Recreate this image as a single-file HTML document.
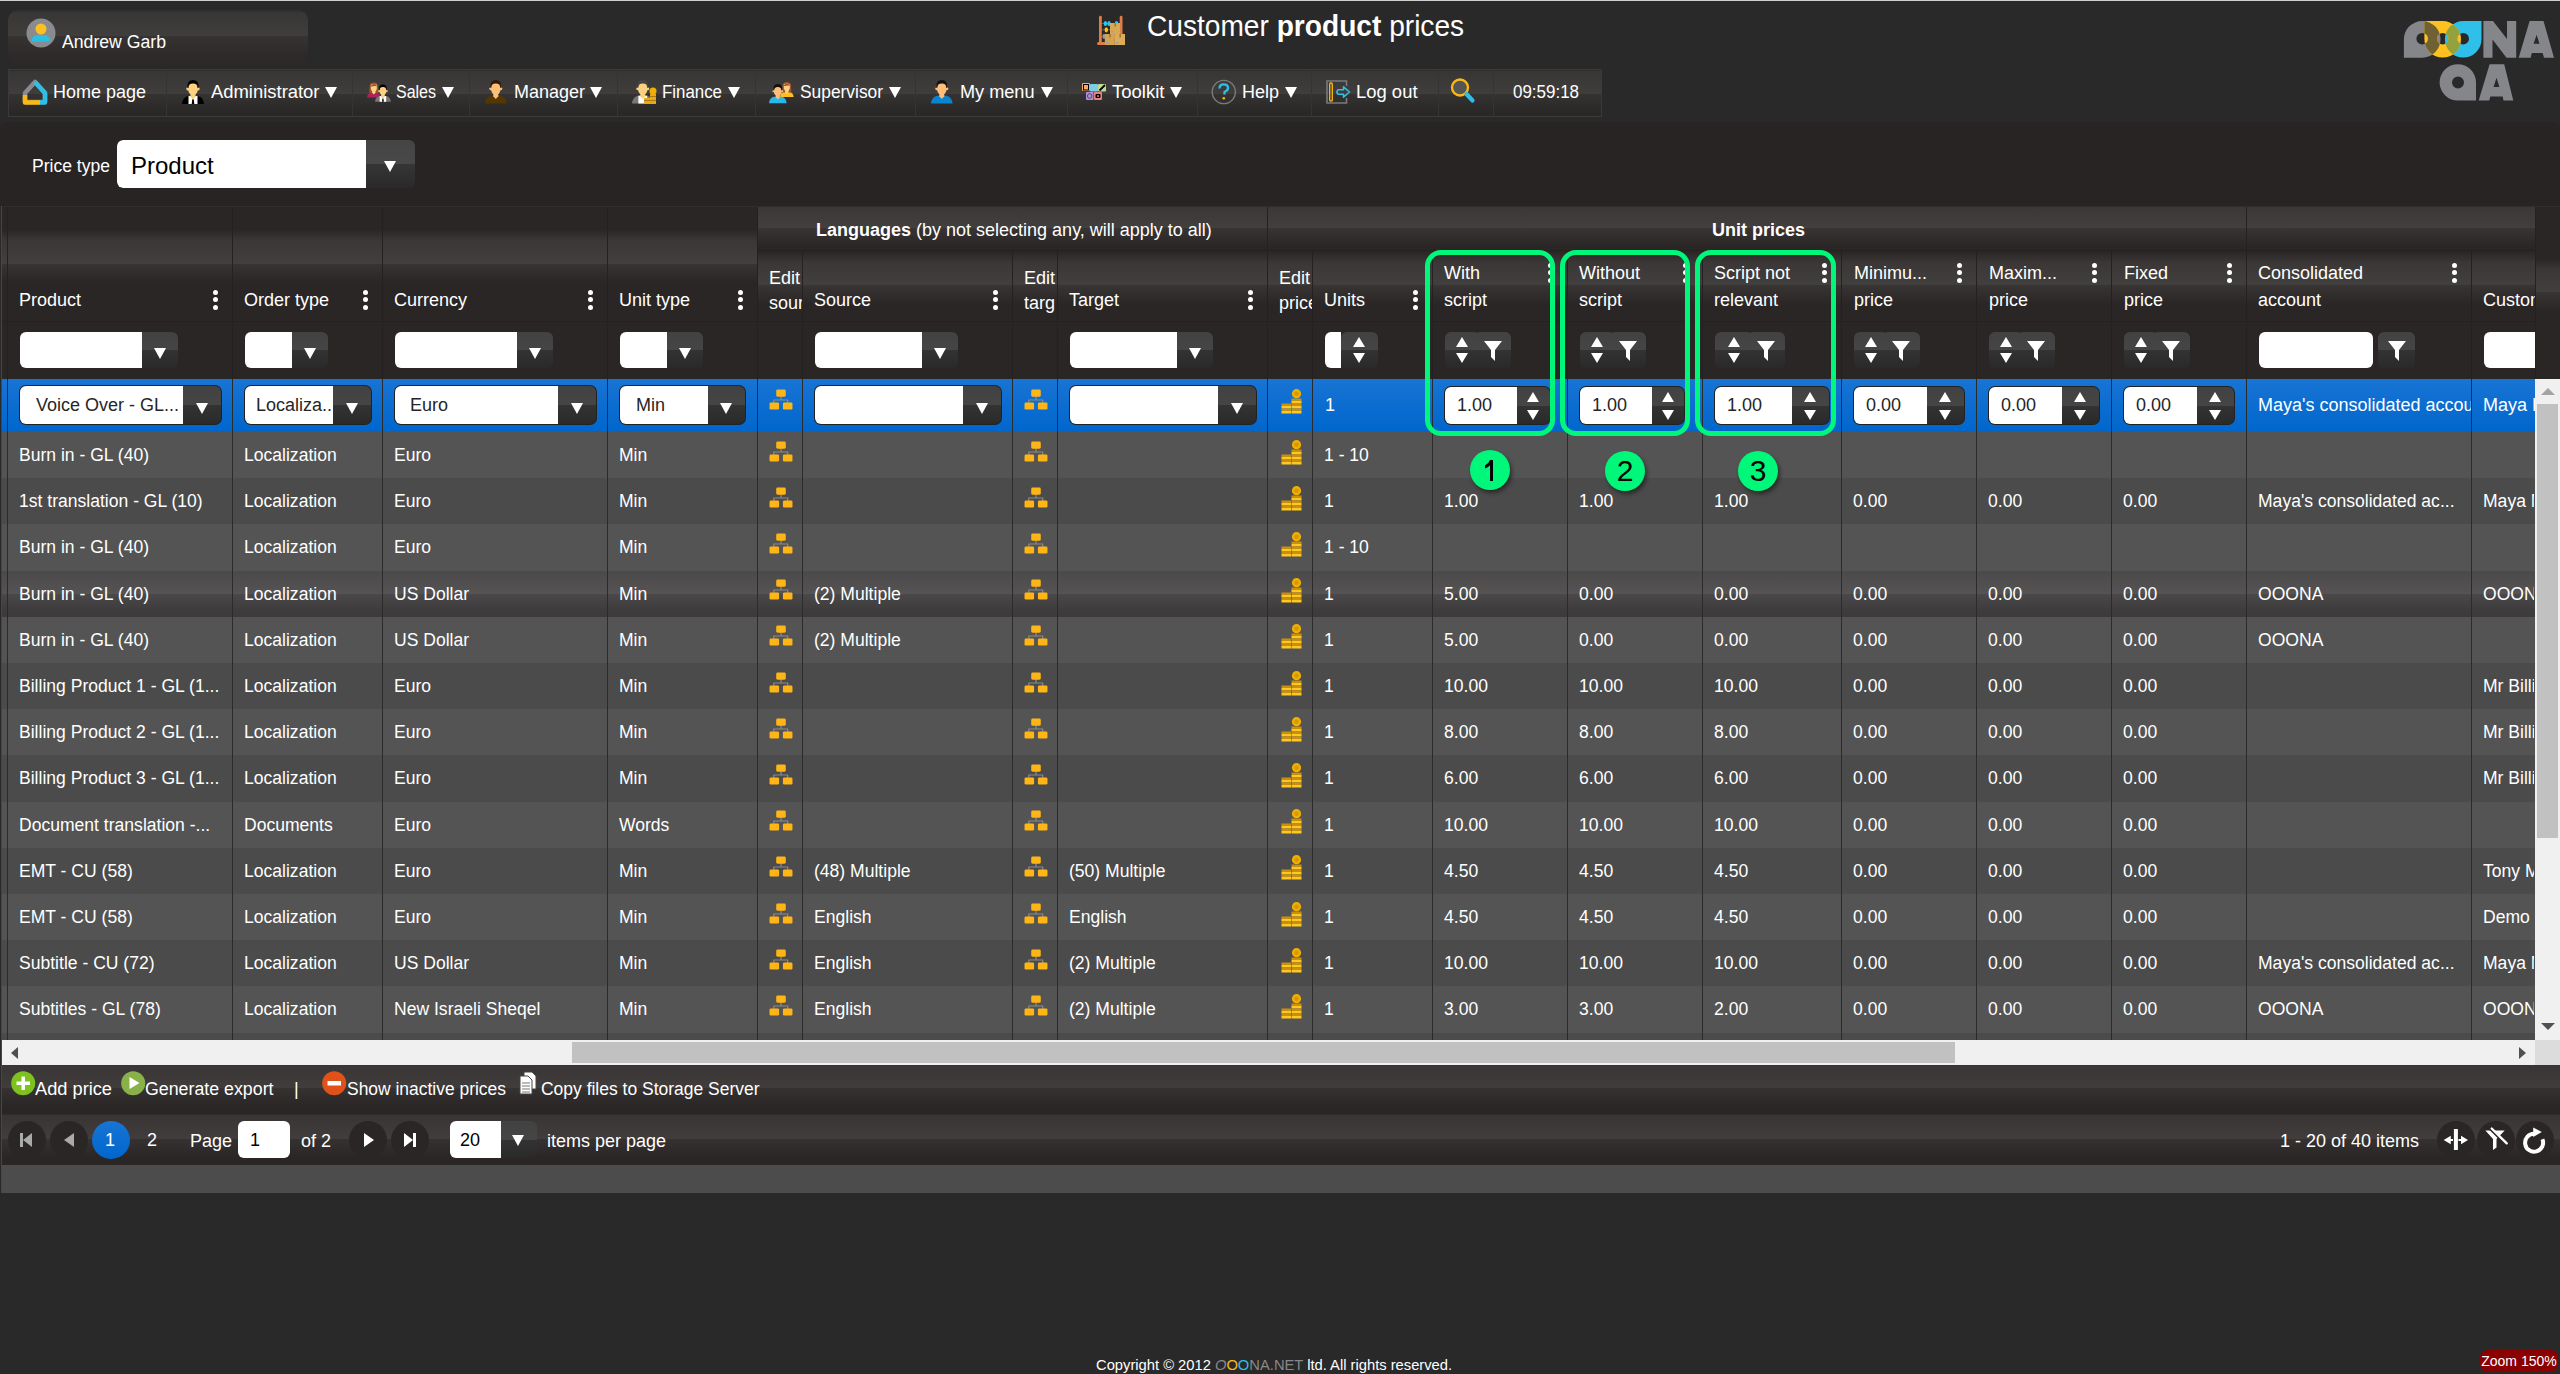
<!DOCTYPE html><html><head><meta charset='utf-8'><style>
*{box-sizing:border-box;margin:0;padding:0}
html,body{width:2560px;height:1374px;overflow:hidden;background:#292929;font-family:"Liberation Sans", sans-serif;color:#fff}
.a{position:absolute}
.t{position:absolute;white-space:nowrap;font-size:18px;line-height:24px}
.clip{overflow:hidden}
.tri{position:absolute;width:0;height:0;border-left:6.5px solid transparent;border-right:6.5px solid transparent;border-top:11px solid #fff}
.keb{position:absolute;width:5px;height:20px}
.keb i{position:absolute;left:0;width:5px;height:5px;border-radius:50%;background:#fff}
</style></head><body>
<div class='a' style='left:0;top:0;width:2560px;height:1px;background:#cfcfcf'></div>
<div class='a' style='left:8px;top:9px;width:300px;height:54px;border-radius:12px;background:linear-gradient(to bottom, #2b2828 0px, #2b2828 -7px, #393636 4px, #403e3d 27px, #363433 27px, #2d2a29 46px, #2d2a29 54px)'></div>
<svg class='a' style='left:26px;top:18px' width='30' height='30' viewBox='0 0 30 30'>
<circle cx='15' cy='15' r='14.5' fill='#8a8b8f'/><circle cx='15' cy='11' r='5.5' fill='#fec01e'/>
<path d='M5.5 23.5 Q6 17.5 11 17 L19 17 Q24 17.5 24.5 23.5 Z' fill='#2bbfe3'/></svg>
<div class='t' style='left:62px;top:29.5px;transform:scaleX(0.9807);transform-origin:0 0;'>Andrew Garb</div>
<svg class='a' style='left:1092px;top:10px' width='40' height='40' viewBox='0 0 40 40'>
<rect x='9.5' y='13' width='18.5' height='1' fill='#8a5a20'/><rect x='9.5' y='19.3' width='18.5' height='1' fill='#8a5a20'/><rect x='9.5' y='26.2' width='18.5' height='1' fill='#8a5a20'/>
<ellipse cx='13.4' cy='13.5' rx='1.7' ry='2.6' fill='#2cc8f0'/><ellipse cx='17' cy='13.5' rx='1.7' ry='2.6' fill='#2cc8f0'/><ellipse cx='24.5' cy='13' rx='1.7' ry='2' fill='#2cc8f0'/>
<ellipse cx='14.3' cy='19.8' rx='1.7' ry='2.6' fill='#fec01e'/><ellipse cx='12' cy='26.5' rx='1.5' ry='2.4' fill='#999'/>
<rect x='7' y='5.8' width='2.8' height='27' rx='1.4' fill='#e07c46'/><rect x='27.7' y='5.8' width='2.8' height='20' rx='1.4' fill='#e07c46'/>
<rect x='5' y='32' width='9' height='3' rx='1.5' fill='#e07c46'/>
<rect x='18' y='13' width='10' height='11' fill='#d9a856'/><rect x='22.5' y='13' width='1.3' height='3.5' fill='#9a6a28'/><rect x='19' y='21' width='2.5' height='1.5' fill='#9aa0b0'/>
<rect x='12.8' y='24' width='9.4' height='11' fill='#d4a450'/><rect x='17.3' y='24' width='1.3' height='3.5' fill='#9a6a28'/><rect x='14' y='32' width='2.5' height='1.5' fill='#9aa0b0'/>
<rect x='22.2' y='24' width='10.8' height='11' fill='#dcac58'/><rect x='27.5' y='24' width='1.3' height='3.5' fill='#9a6a28'/><rect x='24' y='32' width='2.5' height='1.5' fill='#9aa0b0'/>
</svg>
<div class='t' style='left:1147px;top:8.5px;font-size:29.5px;line-height:34px;transform:scaleX(0.953);transform-origin:0 0'>Customer <b>product</b> prices</div>
<svg class='a' style='left:2395px;top:10px' width='165' height='100' viewBox='0 0 165 100'>
<defs><clipPath id='cg'><path d='M8.9 47.7 V29.3 A18.3 18.3 0 0 1 27.2 11 A18.3 18.3 0 0 1 45.5 29.3 A18.3 18.3 0 0 1 27.2 47.7 Z M21.4 28.7 a5.8 5.8 0 1 0 11.6 0 a5.8 5.8 0 1 0 -11.6 0 Z' clip-rule='evenodd'/></clipPath>
<clipPath id='cc'><path d='M68.2 11 H86.5 V29.3 A18.3 18.3 0 0 1 68.2 47.6 A18.3 18.3 0 0 1 49.9 29.3 A18.3 18.3 0 0 1 68.2 11 Z M62.400000000000006 28.7 a5.8 5.8 0 1 0 11.6 0 a5.8 5.8 0 1 0 -11.6 0 Z' clip-rule='evenodd'/></clipPath></defs>
<g fill='#85868a'>
<path d='M8.9 47.7 V29.3 A18.3 18.3 0 0 1 27.2 11 A18.3 18.3 0 0 1 45.5 29.3 A18.3 18.3 0 0 1 27.2 47.7 Z M21.4 28.7 a5.8 5.8 0 1 0 11.6 0 a5.8 5.8 0 1 0 -11.6 0 Z' fill-rule='evenodd'/>
<path d='M88.4 47.7 V11 H98 L112 29 V11 H121.2 V47.7 H111.5 L97.5 29.5 V47.7 Z'/>
<path d='M123.7 47.7 L134.6 11 H148.5 L159 47.7 H149 L147.7 43 H136.8 L135.6 47.7 Z M138.6 33.8 H144.5 L141.6 24.7 Z' fill-rule='evenodd'/>
<path d='M44.6 72.4 A18.2 18.2 0 0 1 62.8 54.2 A18.2 18.2 0 0 1 81 72.4 V90.6 H62.8 A18.2 18.2 0 0 1 44.6 72.4 Z M57 72.4 a6 6 0 1 0 12 0 a6 6 0 1 0 -12 0 Z' fill-rule='evenodd'/>
<path d='M83.7 90.6 L94.6 54.2 H109.2 L118.3 90.6 H108.5 L107.7 86.6 H95.3 L94.3 90.6 Z M98.6 77.1 H104.4 L101.5 67.7 Z' fill-rule='evenodd'/>
</g>
<path d='M68.2 11 H86.5 V29.3 A18.3 18.3 0 0 1 68.2 47.6 A18.3 18.3 0 0 1 49.9 29.3 A18.3 18.3 0 0 1 68.2 11 Z M62.400000000000006 28.7 a5.8 5.8 0 1 0 11.6 0 a5.8 5.8 0 1 0 -11.6 0 Z' fill='#2ec0e8' fill-rule='evenodd'/>
<path d='M29.4 11 H47.7 A18.3 18.3 0 0 1 66 29.3 A18.3 18.3 0 0 1 47.7 47.6 A18.3 18.3 0 0 1 29.4 29.3 Z M41.900000000000006 28.7 a5.8 5.8 0 1 0 11.6 0 a5.8 5.8 0 1 0 -11.6 0 Z' fill='#fec120' fill-rule='evenodd'/>
<path d='M29.4 11 H47.7 A18.3 18.3 0 0 1 66 29.3 A18.3 18.3 0 0 1 47.7 47.6 A18.3 18.3 0 0 1 29.4 29.3 Z M41.900000000000006 28.7 a5.8 5.8 0 1 0 11.6 0 a5.8 5.8 0 1 0 -11.6 0 Z' fill='#6f6132' fill-rule='evenodd' clip-path='url(#cg)'/>
<path d='M29.4 11 H47.7 A18.3 18.3 0 0 1 66 29.3 A18.3 18.3 0 0 1 47.7 47.6 A18.3 18.3 0 0 1 29.4 29.3 Z M41.900000000000006 28.7 a5.8 5.8 0 1 0 11.6 0 a5.8 5.8 0 1 0 -11.6 0 Z' fill='#94a23e' fill-rule='evenodd' clip-path='url(#cc)'/>
</svg>
<div class='a' style='left:8px;top:69px;width:1594px;height:48px;border:1px solid #3b3939;background:linear-gradient(to bottom, #2a2727 0px, #2a2727 -10px, #383635 1px, #403e3d 24px, #353332 24px, #2a2727 43px, #2a2727 48px)'></div>
<div class='a' style='left:166px;top:70px;width:1px;height:46px;background:#252222;border-right:1px solid #363433'></div>
<div class='a' style='left:352px;top:70px;width:1px;height:46px;background:#252222;border-right:1px solid #363433'></div>
<div class='a' style='left:469px;top:70px;width:1px;height:46px;background:#252222;border-right:1px solid #363433'></div>
<div class='a' style='left:617px;top:70px;width:1px;height:46px;background:#252222;border-right:1px solid #363433'></div>
<div class='a' style='left:755px;top:70px;width:1px;height:46px;background:#252222;border-right:1px solid #363433'></div>
<div class='a' style='left:915px;top:70px;width:1px;height:46px;background:#252222;border-right:1px solid #363433'></div>
<div class='a' style='left:1067px;top:70px;width:1px;height:46px;background:#252222;border-right:1px solid #363433'></div>
<div class='a' style='left:1197px;top:70px;width:1px;height:46px;background:#252222;border-right:1px solid #363433'></div>
<div class='a' style='left:1311px;top:70px;width:1px;height:46px;background:#252222;border-right:1px solid #363433'></div>
<div class='a' style='left:1438px;top:70px;width:1px;height:46px;background:#252222;border-right:1px solid #363433'></div>
<div class='a' style='left:1493px;top:70px;width:1px;height:46px;background:#252222;border-right:1px solid #363433'></div>
<div class='t' style='left:53px;top:80px;transform:scaleX(0.9994);transform-origin:0 0;'>Home page</div>
<div class='t' style='left:211px;top:80px;transform:scaleX(1.0233);transform-origin:0 0;'>Administrator</div>
<div class='tri' style='left:325px;top:87px'></div>
<div class='t' style='left:396px;top:80px;transform:scaleX(0.8884);transform-origin:0 0;'>Sales</div>
<div class='tri' style='left:442px;top:87px'></div>
<div class='t' style='left:514px;top:80px;transform:scaleX(0.9994);transform-origin:0 0;'>Manager</div>
<div class='tri' style='left:590px;top:87px'></div>
<div class='t' style='left:662px;top:80px;transform:scaleX(0.9370);transform-origin:0 0;'>Finance</div>
<div class='tri' style='left:728px;top:87px'></div>
<div class='t' style='left:799.5px;top:80px;transform:scaleX(0.9647);transform-origin:0 0;'>Supervisor</div>
<div class='tri' style='left:889px;top:87px'></div>
<div class='t' style='left:960px;top:80px;transform:scaleX(1.0065);transform-origin:0 0;'>My menu</div>
<div class='tri' style='left:1041px;top:87px'></div>
<div class='t' style='left:1112px;top:80px;transform:scaleX(1.0290);transform-origin:0 0;'>Toolkit</div>
<div class='tri' style='left:1170px;top:87px'></div>
<div class='t' style='left:1242px;top:80px;transform:scaleX(0.9995);transform-origin:0 0;'>Help</div>
<div class='tri' style='left:1285px;top:87px'></div>
<div class='t' style='left:1356px;top:80px;transform:scaleX(1.0240);transform-origin:0 0;'>Log out</div>
<div class='t' style='left:1513px;top:80px;transform:scaleX(0.9419);transform-origin:0 0;'>09:59:18</div>
<svg class='a' style='left:0;top:69px' width='1602' height='48' viewBox='0 69 1602 48'><path d='M25 93 L35 82 L45 93 V102 H25 Z' fill='none' stroke='#8a8b8f' stroke-width='4.5' stroke-linejoin='round'/>
<path d='M35 82 L45 93 V102.5 H40' fill='none' stroke='#2fbfe6' stroke-width='4.5' stroke-linejoin='round'/>
<path d='M25 95 V102.5 H40' fill='none' stroke='#fbb914' stroke-width='4.5' stroke-linejoin='round'/><g transform='translate(182,80) scale(1.0)'><path d='M0 24 Q0.5 17.5 6 16 L16 16 Q21.5 17.5 22 24 Z' fill='#000'/><rect x='6.5' y='16' width='9' height='8' fill='#fff'/><rect x='8.5' y='12' width='5' height='5' fill='#fdd082'/><path d='M8 16 L11 19.5 L14 16 Z' fill='#fdd082'/><path d='M6.2 5 Q6 2.5 11 2.5 Q16 2.5 15.8 5 L15.8 10.5 Q15 14.5 11 15.5 Q7 14.5 6.2 10.5 Z' fill='#fdd082'/><circle cx='5.7' cy='9' r='1.4' fill='#fdd082'/><circle cx='16.3' cy='9' r='1.4' fill='#fdd082'/><path d='M5.6 8 Q4.8 0 11 0 Q17.2 0 16.4 8 L15.6 8 Q15.5 3.5 11 3.6 Q6.5 3.5 6.4 8 Z' fill='#000'/><path d='M10.3 19.3 H11.7 L12.3 24 H9.7 Z' fill='#000'/></g><g transform='translate(367,82.5) scale(0.62)'><path d='M0 24 Q0.5 17.5 6 16 L16 16 Q21.5 17.5 22 24 Z' fill='#b0205a'/><path d='M4 17 Q3.5 4 5.5 2 Q11 -2 16.5 2 Q18.5 4 18 17 Z' fill='#a0522d'/><rect x='8.5' y='12' width='5' height='5' fill='#fdd082'/><path d='M8 16 L11 19.5 L14 16 Z' fill='#fdd082'/><path d='M6.2 5 Q6 2.5 11 2.5 Q16 2.5 15.8 5 L15.8 10.5 Q15 14.5 11 15.5 Q7 14.5 6.2 10.5 Z' fill='#fdd082'/><path d='M6 7 Q7 2.5 12 2.5 Q15 3.5 16 6 Q12 5 6 7 Z' fill='#a0522d'/></g><g transform='translate(375,84.5) scale(0.72)'><path d='M0 24 Q0.5 17.5 6 16 L16 16 Q21.5 17.5 22 24 Z' fill='#777'/><rect x='6.5' y='16' width='9' height='8' fill='#fff'/><rect x='8.5' y='12' width='5' height='5' fill='#fdd082'/><path d='M8 16 L11 19.5 L14 16 Z' fill='#fdd082'/><path d='M6.2 5 Q6 2.5 11 2.5 Q16 2.5 15.8 5 L15.8 10.5 Q15 14.5 11 15.5 Q7 14.5 6.2 10.5 Z' fill='#fdd082'/><circle cx='5.7' cy='9' r='1.4' fill='#fdd082'/><circle cx='16.3' cy='9' r='1.4' fill='#fdd082'/><path d='M5.6 8 Q4.8 0 11 0 Q17.2 0 16.4 8 L15.6 8 Q15.5 3.5 11 3.6 Q6.5 3.5 6.4 8 Z' fill='#000'/><path d='M10.3 19.3 H11.7 L12.3 24 H9.7 Z' fill='#000'/></g><g transform='translate(485,80) scale(0.98)'><path d='M0 24 Q0.5 17.5 6 16 L16 16 Q21.5 17.5 22 24 Z' fill='#553600'/><rect x='8.5' y='12' width='5' height='5' fill='#ffbe78'/><path d='M8 16 L11 19.5 L14 16 Z' fill='#ffbe78'/><path d='M6.2 5 Q6 2.5 11 2.5 Q16 2.5 15.8 5 L15.8 10.5 Q15 14.5 11 15.5 Q7 14.5 6.2 10.5 Z' fill='#ffbe78'/><circle cx='5.7' cy='9' r='1.4' fill='#ffbe78'/><circle cx='16.3' cy='9' r='1.4' fill='#ffbe78'/><path d='M5.6 8 Q4.8 0 11 0 Q17.2 0 16.4 8 L15.6 8 Q15.5 3.5 11 3.6 Q6.5 3.5 6.4 8 Z' fill='#2e1a08'/></g><g transform='translate(632,80) scale(0.98)'><path d='M0 24 Q0.5 17.5 6 16 L16 16 Q21.5 17.5 22 24 Z' fill='#777'/><rect x='6.5' y='16' width='9' height='8' fill='#fff'/><rect x='8.5' y='12' width='5' height='5' fill='#fdd082'/><path d='M8 16 L11 19.5 L14 16 Z' fill='#fdd082'/><path d='M6.2 5 Q6 2.5 11 2.5 Q16 2.5 15.8 5 L15.8 10.5 Q15 14.5 11 15.5 Q7 14.5 6.2 10.5 Z' fill='#fdd082'/><circle cx='5.7' cy='9' r='1.4' fill='#fdd082'/><circle cx='16.3' cy='9' r='1.4' fill='#fdd082'/><path d='M5.6 8 Q4.8 0 11 0 Q17.2 0 16.4 8 L15.6 8 Q15.5 3.5 11 3.6 Q6.5 3.5 6.4 8 Z' fill='#444'/></g><rect x='644' y='98' width='12' height='6' fill='#e8a917'/><rect x='650' y='94' width='6' height='10' fill='#e8a917'/><rect x='644' y='100' width='12' height='1' fill='#a87a10'/><rect x='650' y='96' width='6' height='1' fill='#a87a10'/><circle cx='653' cy='91' r='3.5' fill='#f0b000'/><g transform='translate(780,82) scale(0.62)'><path d='M0 24 Q0.5 17.5 6 16 L16 16 Q21.5 17.5 22 24 Z' fill='#fec01e'/><path d='M4 17 Q3.5 4 5.5 2 Q11 -2 16.5 2 Q18.5 4 18 17 Z' fill='#a0522d'/><rect x='8.5' y='12' width='5' height='5' fill='#fdd082'/><path d='M8 16 L11 19.5 L14 16 Z' fill='#fdd082'/><path d='M6.2 5 Q6 2.5 11 2.5 Q16 2.5 15.8 5 L15.8 10.5 Q15 14.5 11 15.5 Q7 14.5 6.2 10.5 Z' fill='#fdd082'/><path d='M6 7 Q7 2.5 12 2.5 Q15 3.5 16 6 Q12 5 6 7 Z' fill='#a0522d'/></g><g transform='translate(769,84) scale(0.8)'><path d='M0 24 Q0.5 17.5 6 16 L16 16 Q21.5 17.5 22 24 Z' fill='#2ab8e8'/><rect x='8.5' y='12' width='5' height='5' fill='#ffbe78'/><path d='M8 16 L11 19.5 L14 16 Z' fill='#ffbe78'/><path d='M6.2 5 Q6 2.5 11 2.5 Q16 2.5 15.8 5 L15.8 10.5 Q15 14.5 11 15.5 Q7 14.5 6.2 10.5 Z' fill='#ffbe78'/><circle cx='5.7' cy='9' r='1.4' fill='#ffbe78'/><circle cx='16.3' cy='9' r='1.4' fill='#ffbe78'/><path d='M5.6 8 Q4.8 0 11 0 Q17.2 0 16.4 8 L15.6 8 Q15.5 3.5 11 3.6 Q6.5 3.5 6.4 8 Z' fill='#111'/></g><g transform='translate(931,80) scale(0.98)'><path d='M0 24 Q0.5 17.5 6 16 L16 16 Q21.5 17.5 22 24 Z' fill='#0a84d0'/><rect x='8.5' y='12' width='5' height='5' fill='#ffbe78'/><path d='M8 16 L11 19.5 L14 16 Z' fill='#ffbe78'/><path d='M6.2 5 Q6 2.5 11 2.5 Q16 2.5 15.8 5 L15.8 10.5 Q15 14.5 11 15.5 Q7 14.5 6.2 10.5 Z' fill='#ffbe78'/><circle cx='5.7' cy='9' r='1.4' fill='#ffbe78'/><circle cx='16.3' cy='9' r='1.4' fill='#ffbe78'/><path d='M5.6 8 Q4.8 0 11 0 Q17.2 0 16.4 8 L15.6 8 Q15.5 3.5 11 3.6 Q6.5 3.5 6.4 8 Z' fill='#111'/></g><rect x='1082' y='83' width='8' height='8' rx='1' fill='#f5a868'/><rect x='1083.5' y='84.5' width='5' height='5.5' fill='none' stroke='#000' stroke-width='1'/>
<rect x='1090' y='84' width='8' height='7.5' rx='1' fill='#7dcde6'/><rect x='1098' y='84' width='8' height='7.5' rx='1' fill='#c0dc90'/><path d='M1099.5 90.5 L1105 85' stroke='#000' stroke-width='1.8'/>
<rect x='1086' y='92' width='7.5' height='8' rx='1' fill='#b090d8'/><circle cx='1089.7' cy='96' r='2.3' fill='none' stroke='#444' stroke-width='0.9'/>
<rect x='1094' y='92' width='8' height='8' rx='1' fill='#e88080'/><rect x='1095.5' y='94' width='5' height='4' rx='1' fill='#000'/><rect x='1097' y='95.3' width='2' height='1.5' fill='#e88080'/><circle cx='1223.8' cy='92' r='11.6' fill='none' stroke='#7a7a7a' stroke-width='1.4'/>
<path d='M1219.5 88.5 Q1219.5 84.3 1223.8 84.3 Q1228 84.3 1228 88 Q1228 90.5 1224.5 92 V94.5' fill='none' stroke='#2fbfe6' stroke-width='2.3'/>
<circle cx='1223.8' cy='98.3' r='1.3' fill='#fbb914'/><path d='M1346.5 86 V81 H1327 V103 H1346.5 V98' fill='none' stroke='#7a7a7a' stroke-width='1.6'/>
<rect x='1329.7' y='83' width='2.6' height='18' rx='1' fill='none' stroke='#fbb914' stroke-width='1.3'/>
<path d='M1338 89.8 H1343.5 V86.8 L1349.5 92 L1343.5 97.2 V94.2 H1338 Q1335.8 92 1338 89.8 Z' fill='none' stroke='#2fbfe6' stroke-width='1.6' stroke-linejoin='round'/><circle cx='1460' cy='87.5' r='8' fill='#555' stroke='#fbb914' stroke-width='2.3'/>
<path d='M1466.5 94 L1472.5 100.5' stroke='#2fbfe6' stroke-width='4.2' stroke-linecap='round'/></svg>
<div class='a' style='left:0;top:122px;width:2560px;height:1071px;background:#282424;border-top-left-radius:6px;border-top-right-radius:6px'></div>
<div class='t' style='left:32px;top:153.5px;transform:scaleX(0.9746);transform-origin:0 0;'>Price type</div>
<div class='a' style='left:117px;top:140px;width:298px;height:48px;border-radius:6px;overflow:hidden;background:linear-gradient(to bottom, #454545 0px, #454545 0px, #484848 24px, #363636 24px, #2a2a2a 48px, #2a2a2a 48px);'><div class='a' style='left:0;top:0;width:249px;height:48px;background:#fff;border-radius:6px 0 0 6px'></div><div class='t' style='left:14px;top:13.5px;color:#000;font-size:24px;width:233px;overflow:hidden;text-overflow:ellipsis'>Product</div><div class='tri' style='left:267px;top:21px'></div></div>
<div class='a' style='left:0;top:206px;width:2560px;height:859px;background:#2a2626'></div>
<div class='a' style='left:0;top:206px;width:1px;height:987px;background:#292929'></div>
<div class='a' style='left:2px;top:206px;width:5px;height:115px;background:linear-gradient(to bottom, #2a2626 0px, #2a2626 23.5px, #3a3736 34.5px, #42403f 57.5px, #373433 57.5px, #2a2626 76.5px, #2a2626 115px)'></div>
<div class='a' style='left:7px;top:206px;width:225px;height:115px;background:linear-gradient(to bottom, #2a2626 0px, #2a2626 23.5px, #3a3736 34.5px, #42403f 57.5px, #373433 57.5px, #2a2626 76.5px, #2a2626 115px)'></div>
<div class='a' style='left:232px;top:206px;width:150px;height:115px;background:linear-gradient(to bottom, #2a2626 0px, #2a2626 23.5px, #3a3736 34.5px, #42403f 57.5px, #373433 57.5px, #2a2626 76.5px, #2a2626 115px)'></div>
<div class='a' style='left:382px;top:206px;width:225px;height:115px;background:linear-gradient(to bottom, #2a2626 0px, #2a2626 23.5px, #3a3736 34.5px, #42403f 57.5px, #373433 57.5px, #2a2626 76.5px, #2a2626 115px)'></div>
<div class='a' style='left:607px;top:206px;width:150px;height:115px;background:linear-gradient(to bottom, #2a2626 0px, #2a2626 23.5px, #3a3736 34.5px, #42403f 57.5px, #373433 57.5px, #2a2626 76.5px, #2a2626 115px)'></div>
<div class='a' style='left:757px;top:206px;width:510px;height:44px;background:linear-gradient(to bottom, #2a2626 0px, #2a2626 -12.0px, #3a3736 -1.0px, #42403f 22.0px, #373433 22.0px, #2a2626 41.0px, #2a2626 44px)'></div>
<div class='a' style='left:1267px;top:206px;width:979px;height:44px;background:linear-gradient(to bottom, #2a2626 0px, #2a2626 -12.0px, #3a3736 -1.0px, #42403f 22.0px, #373433 22.0px, #2a2626 41.0px, #2a2626 44px)'></div>
<div class='a' style='left:2246px;top:206px;width:289px;height:44px;background:linear-gradient(to bottom, #2a2626 0px, #2a2626 -12.0px, #3a3736 -1.0px, #42403f 22.0px, #373433 22.0px, #2a2626 41.0px, #2a2626 44px)'></div>
<div class='a' style='left:757px;top:250px;width:45px;height:71px;background:linear-gradient(to bottom, #2a2626 0px, #2a2626 1.5px, #3a3736 12.5px, #42403f 35.5px, #373433 35.5px, #2a2626 54.5px, #2a2626 71px)'></div>
<div class='a' style='left:802px;top:250px;width:210px;height:71px;background:linear-gradient(to bottom, #2a2626 0px, #2a2626 1.5px, #3a3736 12.5px, #42403f 35.5px, #373433 35.5px, #2a2626 54.5px, #2a2626 71px)'></div>
<div class='a' style='left:1012px;top:250px;width:45px;height:71px;background:linear-gradient(to bottom, #2a2626 0px, #2a2626 1.5px, #3a3736 12.5px, #42403f 35.5px, #373433 35.5px, #2a2626 54.5px, #2a2626 71px)'></div>
<div class='a' style='left:1057px;top:250px;width:210px;height:71px;background:linear-gradient(to bottom, #2a2626 0px, #2a2626 1.5px, #3a3736 12.5px, #42403f 35.5px, #373433 35.5px, #2a2626 54.5px, #2a2626 71px)'></div>
<div class='a' style='left:1267px;top:250px;width:45px;height:71px;background:linear-gradient(to bottom, #2a2626 0px, #2a2626 1.5px, #3a3736 12.5px, #42403f 35.5px, #373433 35.5px, #2a2626 54.5px, #2a2626 71px)'></div>
<div class='a' style='left:1312px;top:250px;width:120px;height:71px;background:linear-gradient(to bottom, #2a2626 0px, #2a2626 1.5px, #3a3736 12.5px, #42403f 35.5px, #373433 35.5px, #2a2626 54.5px, #2a2626 71px)'></div>
<div class='a' style='left:1432px;top:250px;width:135px;height:71px;background:linear-gradient(to bottom, #2a2626 0px, #2a2626 1.5px, #3a3736 12.5px, #42403f 35.5px, #373433 35.5px, #2a2626 54.5px, #2a2626 71px)'></div>
<div class='a' style='left:1567px;top:250px;width:135px;height:71px;background:linear-gradient(to bottom, #2a2626 0px, #2a2626 1.5px, #3a3736 12.5px, #42403f 35.5px, #373433 35.5px, #2a2626 54.5px, #2a2626 71px)'></div>
<div class='a' style='left:1702px;top:250px;width:139px;height:71px;background:linear-gradient(to bottom, #2a2626 0px, #2a2626 1.5px, #3a3736 12.5px, #42403f 35.5px, #373433 35.5px, #2a2626 54.5px, #2a2626 71px)'></div>
<div class='a' style='left:1841px;top:250px;width:135px;height:71px;background:linear-gradient(to bottom, #2a2626 0px, #2a2626 1.5px, #3a3736 12.5px, #42403f 35.5px, #373433 35.5px, #2a2626 54.5px, #2a2626 71px)'></div>
<div class='a' style='left:1976px;top:250px;width:135px;height:71px;background:linear-gradient(to bottom, #2a2626 0px, #2a2626 1.5px, #3a3736 12.5px, #42403f 35.5px, #373433 35.5px, #2a2626 54.5px, #2a2626 71px)'></div>
<div class='a' style='left:2111px;top:250px;width:135px;height:71px;background:linear-gradient(to bottom, #2a2626 0px, #2a2626 1.5px, #3a3736 12.5px, #42403f 35.5px, #373433 35.5px, #2a2626 54.5px, #2a2626 71px)'></div>
<div class='a' style='left:2246px;top:250px;width:225px;height:71px;background:linear-gradient(to bottom, #2a2626 0px, #2a2626 1.5px, #3a3736 12.5px, #42403f 35.5px, #373433 35.5px, #2a2626 54.5px, #2a2626 71px)'></div>
<div class='a' style='left:2471px;top:250px;width:64px;height:71px;background:linear-gradient(to bottom, #2a2626 0px, #2a2626 1.5px, #3a3736 12.5px, #42403f 35.5px, #373433 35.5px, #2a2626 54.5px, #2a2626 71px)'></div>
<div class='a' style='left:2535px;top:206px;width:25px;height:173px;background:linear-gradient(to bottom, #2a2626 0px, #2a2626 52.5px, #3a3736 63.5px, #42403f 86.5px, #373433 86.5px, #2a2626 105.5px, #2a2626 173px)'></div>
<div class='a' style='left:7px;top:206px;width:1px;height:173px;background:#252121'></div>
<div class='a' style='left:232px;top:206px;width:1px;height:173px;background:#252121'></div>
<div class='a' style='left:382px;top:206px;width:1px;height:173px;background:#252121'></div>
<div class='a' style='left:607px;top:206px;width:1px;height:173px;background:#252121'></div>
<div class='a' style='left:757px;top:206px;width:1px;height:173px;background:#252121'></div>
<div class='a' style='left:802px;top:250px;width:1px;height:129px;background:#252121'></div>
<div class='a' style='left:1012px;top:250px;width:1px;height:129px;background:#252121'></div>
<div class='a' style='left:1057px;top:250px;width:1px;height:129px;background:#252121'></div>
<div class='a' style='left:1267px;top:206px;width:1px;height:173px;background:#252121'></div>
<div class='a' style='left:1312px;top:250px;width:1px;height:129px;background:#252121'></div>
<div class='a' style='left:1432px;top:250px;width:1px;height:129px;background:#252121'></div>
<div class='a' style='left:1567px;top:250px;width:1px;height:129px;background:#252121'></div>
<div class='a' style='left:1702px;top:250px;width:1px;height:129px;background:#252121'></div>
<div class='a' style='left:1841px;top:250px;width:1px;height:129px;background:#252121'></div>
<div class='a' style='left:1976px;top:250px;width:1px;height:129px;background:#252121'></div>
<div class='a' style='left:2111px;top:250px;width:1px;height:129px;background:#252121'></div>
<div class='a' style='left:2246px;top:206px;width:1px;height:173px;background:#252121'></div>
<div class='a' style='left:2471px;top:250px;width:1px;height:129px;background:#252121'></div>
<div class='a' style='left:2535px;top:206px;width:1px;height:173px;background:#252121'></div>
<div class='a' style='left:757px;top:250px;width:1778px;height:1px;background:#252121'></div>
<div class='a' style='left:2px;top:321px;width:2533px;height:1px;background:#252121'></div>
<div class='a' style='left:2px;top:206px;width:2558px;height:1px;background:#2e2e2e'></div>
<div class='t' style='left:816px;top:218px'><b>Languages</b> (by not selecting any, will apply to all)</div>
<div class='t' style='left:1712px;top:218px'><b>Unit prices</b></div>
<div class='t' style='left:19px;top:288px'>Product</div>
<div class='keb' style='left:212.5px;top:289.5px'><i style='top:0'></i><i style='top:7.5px'></i><i style='top:15px'></i></div>
<div class='t' style='left:244px;top:288px'>Order type</div>
<div class='keb' style='left:362.5px;top:289.5px'><i style='top:0'></i><i style='top:7.5px'></i><i style='top:15px'></i></div>
<div class='t' style='left:394px;top:288px'>Currency</div>
<div class='keb' style='left:587.5px;top:289.5px'><i style='top:0'></i><i style='top:7.5px'></i><i style='top:15px'></i></div>
<div class='t' style='left:619px;top:288px'>Unit type</div>
<div class='keb' style='left:737.5px;top:289.5px'><i style='top:0'></i><i style='top:7.5px'></i><i style='top:15px'></i></div>
<div class='t' style='left:814px;top:288px'>Source</div>
<div class='keb' style='left:992.5px;top:289.5px'><i style='top:0'></i><i style='top:7.5px'></i><i style='top:15px'></i></div>
<div class='t' style='left:1069px;top:288px'>Target</div>
<div class='keb' style='left:1247.5px;top:289.5px'><i style='top:0'></i><i style='top:7.5px'></i><i style='top:15px'></i></div>
<div class='t' style='left:1324px;top:288px'>Units</div>
<div class='keb' style='left:1412.5px;top:289.5px'><i style='top:0'></i><i style='top:7.5px'></i><i style='top:15px'></i></div>
<div class='t' style='left:769px;top:266px;width:33px;overflow:hidden;line-height:24.5px'>Edit<br>sour</div>
<div class='t' style='left:1024px;top:266px;width:33px;overflow:hidden;line-height:24.5px'>Edit<br>targ</div>
<div class='t' style='left:1279px;top:266px;width:33px;overflow:hidden;line-height:24.5px'>Edit<br>price</div>
<div class='t' style='left:1444px;top:260px;line-height:27px'>With<br>script</div>
<div class='keb' style='left:1547.5px;top:262.5px'><i style='top:0'></i><i style='top:7.5px'></i><i style='top:15px'></i></div>
<div class='t' style='left:1579px;top:260px;line-height:27px'>Without<br>script</div>
<div class='keb' style='left:1682.5px;top:262.5px'><i style='top:0'></i><i style='top:7.5px'></i><i style='top:15px'></i></div>
<div class='t' style='left:1714px;top:260px;line-height:27px'>Script not<br>relevant</div>
<div class='keb' style='left:1821.5px;top:262.5px'><i style='top:0'></i><i style='top:7.5px'></i><i style='top:15px'></i></div>
<div class='t' style='left:1854px;top:260px;line-height:27px'>Minimu...<br>price</div>
<div class='keb' style='left:1956.5px;top:262.5px'><i style='top:0'></i><i style='top:7.5px'></i><i style='top:15px'></i></div>
<div class='t' style='left:1989px;top:260px;line-height:27px'>Maxim...<br>price</div>
<div class='keb' style='left:2091.5px;top:262.5px'><i style='top:0'></i><i style='top:7.5px'></i><i style='top:15px'></i></div>
<div class='t' style='left:2124px;top:260px;line-height:27px'>Fixed<br>price</div>
<div class='keb' style='left:2226.5px;top:262.5px'><i style='top:0'></i><i style='top:7.5px'></i><i style='top:15px'></i></div>
<div class='t' style='left:2258px;top:260px;line-height:27px'>Consolidated<br>account</div>
<div class='keb' style='left:2451.5px;top:262.5px'><i style='top:0'></i><i style='top:7.5px'></i><i style='top:15px'></i></div>
<div class='t' style='left:2483px;top:288px;width:52px;overflow:hidden'>Customer</div>
<div class='a' style='left:20px;top:332px;width:122px;height:36px;background:#fff;border-radius:6px 0 0 6px'></div>
<div class='a' style='left:142px;top:332px;width:36px;height:36px;border-radius:0 6px 6px 0;background:linear-gradient(to bottom, #424242 0px, #424242 0.0px, #454545 18.0px, #333333 18.0px, #2a2a2a 36.0px, #2a2a2a 36px)'></div>
<div class='tri' style='left:153.5px;top:347.5px'></div>
<div class='a' style='left:245px;top:332px;width:47px;height:36px;background:#fff;border-radius:6px 0 0 6px'></div>
<div class='a' style='left:292px;top:332px;width:36px;height:36px;border-radius:0 6px 6px 0;background:linear-gradient(to bottom, #424242 0px, #424242 0.0px, #454545 18.0px, #333333 18.0px, #2a2a2a 36.0px, #2a2a2a 36px)'></div>
<div class='tri' style='left:303.5px;top:347.5px'></div>
<div class='a' style='left:395px;top:332px;width:122px;height:36px;background:#fff;border-radius:6px 0 0 6px'></div>
<div class='a' style='left:517px;top:332px;width:36px;height:36px;border-radius:0 6px 6px 0;background:linear-gradient(to bottom, #424242 0px, #424242 0.0px, #454545 18.0px, #333333 18.0px, #2a2a2a 36.0px, #2a2a2a 36px)'></div>
<div class='tri' style='left:528.5px;top:347.5px'></div>
<div class='a' style='left:620px;top:332px;width:47px;height:36px;background:#fff;border-radius:6px 0 0 6px'></div>
<div class='a' style='left:667px;top:332px;width:36px;height:36px;border-radius:0 6px 6px 0;background:linear-gradient(to bottom, #424242 0px, #424242 0.0px, #454545 18.0px, #333333 18.0px, #2a2a2a 36.0px, #2a2a2a 36px)'></div>
<div class='tri' style='left:678.5px;top:347.5px'></div>
<div class='a' style='left:815px;top:332px;width:107px;height:36px;background:#fff;border-radius:6px 0 0 6px'></div>
<div class='a' style='left:922px;top:332px;width:36px;height:36px;border-radius:0 6px 6px 0;background:linear-gradient(to bottom, #424242 0px, #424242 0.0px, #454545 18.0px, #333333 18.0px, #2a2a2a 36.0px, #2a2a2a 36px)'></div>
<div class='tri' style='left:933.5px;top:347.5px'></div>
<div class='a' style='left:1070px;top:332px;width:107px;height:36px;background:#fff;border-radius:6px 0 0 6px'></div>
<div class='a' style='left:1177px;top:332px;width:36px;height:36px;border-radius:0 6px 6px 0;background:linear-gradient(to bottom, #424242 0px, #424242 0.0px, #454545 18.0px, #333333 18.0px, #2a2a2a 36.0px, #2a2a2a 36px)'></div>
<div class='tri' style='left:1188.5px;top:347.5px'></div>
<div class='a' style='left:1325px;top:332px;width:16px;height:36px;background:#fff;border-radius:6px 0 0 6px'></div>
<div class='a' style='left:1341px;top:332px;width:37px;height:36px;border-radius:6px;background:linear-gradient(to bottom, #424242 0px, #424242 0.0px, #454545 18.0px, #333333 18.0px, #2a2a2a 36.0px, #2a2a2a 36px)'></div>
<div class='a' style='left:1353.0px;top:337.0px;width:0;height:0;border-left:6.5px solid transparent;border-right:6.5px solid transparent;border-bottom:10px solid #fff'></div>
<div class='a' style='left:1353.0px;top:353.0px;width:0;height:0;border-left:6.5px solid transparent;border-right:6.5px solid transparent;border-top:10px solid #fff'></div>
<div class='a' style='left:1445px;top:332px;width:35px;height:36px;border-radius:6px;background:linear-gradient(to bottom, #424242 0px, #424242 0.0px, #454545 18.0px, #333333 18.0px, #2a2a2a 36.0px, #2a2a2a 36px)'></div>
<div class='a' style='left:1456.0px;top:337.0px;width:0;height:0;border-left:6.5px solid transparent;border-right:6.5px solid transparent;border-bottom:10px solid #fff'></div>
<div class='a' style='left:1456.0px;top:353.0px;width:0;height:0;border-left:6.5px solid transparent;border-right:6.5px solid transparent;border-top:10px solid #fff'></div>
<div class='a' style='left:1474px;top:332px;width:37px;height:36px;border-radius:6px;background:linear-gradient(to bottom, #424242 0px, #424242 0.0px, #454545 18.0px, #333333 18.0px, #2a2a2a 36.0px, #2a2a2a 36px)'></div>
<svg class='a' style='left:1482.5px;top:340px' width='20' height='22' viewBox='0 0 20 22'><path d='M1 1 H19 L12 10 V21 L8 17 V10 Z' fill='#fff'/></svg>
<div class='a' style='left:1580px;top:332px;width:35px;height:36px;border-radius:6px;background:linear-gradient(to bottom, #424242 0px, #424242 0.0px, #454545 18.0px, #333333 18.0px, #2a2a2a 36.0px, #2a2a2a 36px)'></div>
<div class='a' style='left:1591.0px;top:337.0px;width:0;height:0;border-left:6.5px solid transparent;border-right:6.5px solid transparent;border-bottom:10px solid #fff'></div>
<div class='a' style='left:1591.0px;top:353.0px;width:0;height:0;border-left:6.5px solid transparent;border-right:6.5px solid transparent;border-top:10px solid #fff'></div>
<div class='a' style='left:1609px;top:332px;width:37px;height:36px;border-radius:6px;background:linear-gradient(to bottom, #424242 0px, #424242 0.0px, #454545 18.0px, #333333 18.0px, #2a2a2a 36.0px, #2a2a2a 36px)'></div>
<svg class='a' style='left:1617.5px;top:340px' width='20' height='22' viewBox='0 0 20 22'><path d='M1 1 H19 L12 10 V21 L8 17 V10 Z' fill='#fff'/></svg>
<div class='a' style='left:1715px;top:332px;width:38px;height:36px;border-radius:6px;background:linear-gradient(to bottom, #424242 0px, #424242 0.0px, #454545 18.0px, #333333 18.0px, #2a2a2a 36.0px, #2a2a2a 36px)'></div>
<div class='a' style='left:1727.5px;top:337.0px;width:0;height:0;border-left:6.5px solid transparent;border-right:6.5px solid transparent;border-bottom:10px solid #fff'></div>
<div class='a' style='left:1727.5px;top:353.0px;width:0;height:0;border-left:6.5px solid transparent;border-right:6.5px solid transparent;border-top:10px solid #fff'></div>
<div class='a' style='left:1747px;top:332px;width:38px;height:36px;border-radius:6px;background:linear-gradient(to bottom, #424242 0px, #424242 0.0px, #454545 18.0px, #333333 18.0px, #2a2a2a 36.0px, #2a2a2a 36px)'></div>
<svg class='a' style='left:1756.0px;top:340px' width='20' height='22' viewBox='0 0 20 22'><path d='M1 1 H19 L12 10 V21 L8 17 V10 Z' fill='#fff'/></svg>
<div class='a' style='left:1854px;top:332px;width:34px;height:36px;border-radius:6px;background:linear-gradient(to bottom, #424242 0px, #424242 0.0px, #454545 18.0px, #333333 18.0px, #2a2a2a 36.0px, #2a2a2a 36px)'></div>
<div class='a' style='left:1864.5px;top:337.0px;width:0;height:0;border-left:6.5px solid transparent;border-right:6.5px solid transparent;border-bottom:10px solid #fff'></div>
<div class='a' style='left:1864.5px;top:353.0px;width:0;height:0;border-left:6.5px solid transparent;border-right:6.5px solid transparent;border-top:10px solid #fff'></div>
<div class='a' style='left:1882px;top:332px;width:38px;height:36px;border-radius:6px;background:linear-gradient(to bottom, #424242 0px, #424242 0.0px, #454545 18.0px, #333333 18.0px, #2a2a2a 36.0px, #2a2a2a 36px)'></div>
<svg class='a' style='left:1891.0px;top:340px' width='20' height='22' viewBox='0 0 20 22'><path d='M1 1 H19 L12 10 V21 L8 17 V10 Z' fill='#fff'/></svg>
<div class='a' style='left:1989px;top:332px;width:34px;height:36px;border-radius:6px;background:linear-gradient(to bottom, #424242 0px, #424242 0.0px, #454545 18.0px, #333333 18.0px, #2a2a2a 36.0px, #2a2a2a 36px)'></div>
<div class='a' style='left:1999.5px;top:337.0px;width:0;height:0;border-left:6.5px solid transparent;border-right:6.5px solid transparent;border-bottom:10px solid #fff'></div>
<div class='a' style='left:1999.5px;top:353.0px;width:0;height:0;border-left:6.5px solid transparent;border-right:6.5px solid transparent;border-top:10px solid #fff'></div>
<div class='a' style='left:2017px;top:332px;width:38px;height:36px;border-radius:6px;background:linear-gradient(to bottom, #424242 0px, #424242 0.0px, #454545 18.0px, #333333 18.0px, #2a2a2a 36.0px, #2a2a2a 36px)'></div>
<svg class='a' style='left:2026.0px;top:340px' width='20' height='22' viewBox='0 0 20 22'><path d='M1 1 H19 L12 10 V21 L8 17 V10 Z' fill='#fff'/></svg>
<div class='a' style='left:2124px;top:332px;width:34px;height:36px;border-radius:6px;background:linear-gradient(to bottom, #424242 0px, #424242 0.0px, #454545 18.0px, #333333 18.0px, #2a2a2a 36.0px, #2a2a2a 36px)'></div>
<div class='a' style='left:2134.5px;top:337.0px;width:0;height:0;border-left:6.5px solid transparent;border-right:6.5px solid transparent;border-bottom:10px solid #fff'></div>
<div class='a' style='left:2134.5px;top:353.0px;width:0;height:0;border-left:6.5px solid transparent;border-right:6.5px solid transparent;border-top:10px solid #fff'></div>
<div class='a' style='left:2152px;top:332px;width:38px;height:36px;border-radius:6px;background:linear-gradient(to bottom, #424242 0px, #424242 0.0px, #454545 18.0px, #333333 18.0px, #2a2a2a 36.0px, #2a2a2a 36px)'></div>
<svg class='a' style='left:2161.0px;top:340px' width='20' height='22' viewBox='0 0 20 22'><path d='M1 1 H19 L12 10 V21 L8 17 V10 Z' fill='#fff'/></svg>
<div class='a' style='left:2259px;top:332px;width:114px;height:36px;background:#fff;border-radius:6px'></div>
<div class='a' style='left:2378px;top:332px;width:37px;height:36px;border-radius:6px;background:linear-gradient(to bottom, #424242 0px, #424242 0.0px, #454545 18.0px, #333333 18.0px, #2a2a2a 36.0px, #2a2a2a 36px)'></div>
<svg class='a' style='left:2386.5px;top:340px' width='20' height='22' viewBox='0 0 20 22'><path d='M1 1 H19 L12 10 V21 L8 17 V10 Z' fill='#fff'/></svg>
<div class='a' style='left:2484px;top:332px;width:51px;height:36px;background:#fff;border-radius:6px 0 0 6px'></div>
<div class='a' style='left:2px;top:432px;width:2533px;height:608px;overflow:hidden'>
<div class='a' style='left:0;top:0.0px;width:2533px;height:46.7px;background:#545454'></div>
<div class='t' style='left:17px;top:11.0px;width:212px;overflow:hidden'><span style='display:inline-block;transform:scaleX(0.975);transform-origin:0 0'>Burn in - GL (40)</span></div>
<div class='t' style='left:242px;top:11.0px;width:137px;overflow:hidden'><span style='display:inline-block;transform:scaleX(0.975);transform-origin:0 0'>Localization</span></div>
<div class='t' style='left:392px;top:11.0px;width:212px;overflow:hidden'><span style='display:inline-block;transform:scaleX(0.975);transform-origin:0 0'>Euro</span></div>
<div class='t' style='left:617px;top:11.0px;width:137px;overflow:hidden'><span style='display:inline-block;transform:scaleX(0.975);transform-origin:0 0'>Min</span></div>
<svg class='a' style='left:767px;top:8.5px' width='24' height='22' viewBox='0 0 25 23'><path d='M12.5 7 V11 M5 15 V11.5 H19.5 V15' fill='none' stroke='#8a8a8a' stroke-width='1.3'/><rect x='7.5' y='0.5' width='10' height='7.5' rx='1.5' fill='#ffb515'/><rect x='0.5' y='14' width='10' height='7.5' rx='1.5' fill='#ffb515'/><rect x='14.5' y='14' width='10' height='7.5' rx='1.5' fill='#ffb515'/></svg>
<svg class='a' style='left:1022px;top:8.5px' width='24' height='22' viewBox='0 0 25 23'><path d='M12.5 7 V11 M5 15 V11.5 H19.5 V15' fill='none' stroke='#8a8a8a' stroke-width='1.3'/><rect x='7.5' y='0.5' width='10' height='7.5' rx='1.5' fill='#ffb515'/><rect x='0.5' y='14' width='10' height='7.5' rx='1.5' fill='#ffb515'/><rect x='14.5' y='14' width='10' height='7.5' rx='1.5' fill='#ffb515'/></svg>
<svg class='a' style='left:1279px;top:7.5px' width='21' height='25' viewBox='0 0 21 25'><circle cx='15.5' cy='4.7' r='4.6' fill='#f0b000'/><circle cx='15.5' cy='4.7' r='2.3' fill='#d89800'/><rect x='10.5' y='9.5' width='10' height='2.5' fill='#c89010'/><rect x='10.5' y='12.0' width='10' height='2.5' fill='#ffc820'/><rect x='10.5' y='14.5' width='10' height='2.5' fill='#c89010'/><rect x='10.5' y='17.0' width='10' height='2.5' fill='#ffc820'/><rect x='10.5' y='19.5' width='10' height='2.5' fill='#c89010'/><rect x='10.5' y='22.0' width='10' height='2.5' fill='#ffc820'/><rect x='0.5' y='14.5' width='9.5' height='2.5' fill='#c89010'/><rect x='0.5' y='17.0' width='9.5' height='2.5' fill='#ffc820'/><rect x='0.5' y='19.5' width='9.5' height='2.5' fill='#c89010'/><rect x='0.5' y='22.0' width='9.5' height='2.5' fill='#ffc820'/></svg>
<div class='t' style='left:1322px;top:11.0px;width:107px;overflow:hidden'><span style='display:inline-block;transform:scaleX(0.975);transform-origin:0 0'>1 - 10</span></div>
<div class='a' style='left:0;top:46.2px;width:2533px;height:46.7px;background:#4b4b4b'></div>
<div class='t' style='left:17px;top:57.2px;width:212px;overflow:hidden'><span style='display:inline-block;transform:scaleX(0.975);transform-origin:0 0'>1st translation - GL (10)</span></div>
<div class='t' style='left:242px;top:57.2px;width:137px;overflow:hidden'><span style='display:inline-block;transform:scaleX(0.975);transform-origin:0 0'>Localization</span></div>
<div class='t' style='left:392px;top:57.2px;width:212px;overflow:hidden'><span style='display:inline-block;transform:scaleX(0.975);transform-origin:0 0'>Euro</span></div>
<div class='t' style='left:617px;top:57.2px;width:137px;overflow:hidden'><span style='display:inline-block;transform:scaleX(0.975);transform-origin:0 0'>Min</span></div>
<svg class='a' style='left:767px;top:54.7px' width='24' height='22' viewBox='0 0 25 23'><path d='M12.5 7 V11 M5 15 V11.5 H19.5 V15' fill='none' stroke='#8a8a8a' stroke-width='1.3'/><rect x='7.5' y='0.5' width='10' height='7.5' rx='1.5' fill='#ffb515'/><rect x='0.5' y='14' width='10' height='7.5' rx='1.5' fill='#ffb515'/><rect x='14.5' y='14' width='10' height='7.5' rx='1.5' fill='#ffb515'/></svg>
<svg class='a' style='left:1022px;top:54.7px' width='24' height='22' viewBox='0 0 25 23'><path d='M12.5 7 V11 M5 15 V11.5 H19.5 V15' fill='none' stroke='#8a8a8a' stroke-width='1.3'/><rect x='7.5' y='0.5' width='10' height='7.5' rx='1.5' fill='#ffb515'/><rect x='0.5' y='14' width='10' height='7.5' rx='1.5' fill='#ffb515'/><rect x='14.5' y='14' width='10' height='7.5' rx='1.5' fill='#ffb515'/></svg>
<svg class='a' style='left:1279px;top:53.7px' width='21' height='25' viewBox='0 0 21 25'><circle cx='15.5' cy='4.7' r='4.6' fill='#f0b000'/><circle cx='15.5' cy='4.7' r='2.3' fill='#d89800'/><rect x='10.5' y='9.5' width='10' height='2.5' fill='#c89010'/><rect x='10.5' y='12.0' width='10' height='2.5' fill='#ffc820'/><rect x='10.5' y='14.5' width='10' height='2.5' fill='#c89010'/><rect x='10.5' y='17.0' width='10' height='2.5' fill='#ffc820'/><rect x='10.5' y='19.5' width='10' height='2.5' fill='#c89010'/><rect x='10.5' y='22.0' width='10' height='2.5' fill='#ffc820'/><rect x='0.5' y='14.5' width='9.5' height='2.5' fill='#c89010'/><rect x='0.5' y='17.0' width='9.5' height='2.5' fill='#ffc820'/><rect x='0.5' y='19.5' width='9.5' height='2.5' fill='#c89010'/><rect x='0.5' y='22.0' width='9.5' height='2.5' fill='#ffc820'/></svg>
<div class='t' style='left:1322px;top:57.2px;width:107px;overflow:hidden'><span style='display:inline-block;transform:scaleX(0.975);transform-origin:0 0'>1</span></div>
<div class='t' style='left:1442px;top:57.2px;width:122px;overflow:hidden'><span style='display:inline-block;transform:scaleX(0.975);transform-origin:0 0'>1.00</span></div>
<div class='t' style='left:1577px;top:57.2px;width:122px;overflow:hidden'><span style='display:inline-block;transform:scaleX(0.975);transform-origin:0 0'>1.00</span></div>
<div class='t' style='left:1712px;top:57.2px;width:126px;overflow:hidden'><span style='display:inline-block;transform:scaleX(0.975);transform-origin:0 0'>1.00</span></div>
<div class='t' style='left:1851px;top:57.2px;width:122px;overflow:hidden'><span style='display:inline-block;transform:scaleX(0.975);transform-origin:0 0'>0.00</span></div>
<div class='t' style='left:1986px;top:57.2px;width:122px;overflow:hidden'><span style='display:inline-block;transform:scaleX(0.975);transform-origin:0 0'>0.00</span></div>
<div class='t' style='left:2121px;top:57.2px;width:122px;overflow:hidden'><span style='display:inline-block;transform:scaleX(0.975);transform-origin:0 0'>0.00</span></div>
<div class='t' style='left:2256px;top:57.2px;width:212px;overflow:hidden'><span style='display:inline-block;transform:scaleX(0.975);transform-origin:0 0'>Maya's consolidated ac...</span></div>
<div class='t' style='left:2481px;top:57.2px;width:51px;overflow:hidden'><span style='display:inline-block;transform:scaleX(0.975);transform-origin:0 0'>Maya Mayer</span></div>
<div class='a' style='left:0;top:92.4px;width:2533px;height:46.7px;background:#545454'></div>
<div class='t' style='left:17px;top:103.4px;width:212px;overflow:hidden'><span style='display:inline-block;transform:scaleX(0.975);transform-origin:0 0'>Burn in - GL (40)</span></div>
<div class='t' style='left:242px;top:103.4px;width:137px;overflow:hidden'><span style='display:inline-block;transform:scaleX(0.975);transform-origin:0 0'>Localization</span></div>
<div class='t' style='left:392px;top:103.4px;width:212px;overflow:hidden'><span style='display:inline-block;transform:scaleX(0.975);transform-origin:0 0'>Euro</span></div>
<div class='t' style='left:617px;top:103.4px;width:137px;overflow:hidden'><span style='display:inline-block;transform:scaleX(0.975);transform-origin:0 0'>Min</span></div>
<svg class='a' style='left:767px;top:100.9px' width='24' height='22' viewBox='0 0 25 23'><path d='M12.5 7 V11 M5 15 V11.5 H19.5 V15' fill='none' stroke='#8a8a8a' stroke-width='1.3'/><rect x='7.5' y='0.5' width='10' height='7.5' rx='1.5' fill='#ffb515'/><rect x='0.5' y='14' width='10' height='7.5' rx='1.5' fill='#ffb515'/><rect x='14.5' y='14' width='10' height='7.5' rx='1.5' fill='#ffb515'/></svg>
<svg class='a' style='left:1022px;top:100.9px' width='24' height='22' viewBox='0 0 25 23'><path d='M12.5 7 V11 M5 15 V11.5 H19.5 V15' fill='none' stroke='#8a8a8a' stroke-width='1.3'/><rect x='7.5' y='0.5' width='10' height='7.5' rx='1.5' fill='#ffb515'/><rect x='0.5' y='14' width='10' height='7.5' rx='1.5' fill='#ffb515'/><rect x='14.5' y='14' width='10' height='7.5' rx='1.5' fill='#ffb515'/></svg>
<svg class='a' style='left:1279px;top:99.9px' width='21' height='25' viewBox='0 0 21 25'><circle cx='15.5' cy='4.7' r='4.6' fill='#f0b000'/><circle cx='15.5' cy='4.7' r='2.3' fill='#d89800'/><rect x='10.5' y='9.5' width='10' height='2.5' fill='#c89010'/><rect x='10.5' y='12.0' width='10' height='2.5' fill='#ffc820'/><rect x='10.5' y='14.5' width='10' height='2.5' fill='#c89010'/><rect x='10.5' y='17.0' width='10' height='2.5' fill='#ffc820'/><rect x='10.5' y='19.5' width='10' height='2.5' fill='#c89010'/><rect x='10.5' y='22.0' width='10' height='2.5' fill='#ffc820'/><rect x='0.5' y='14.5' width='9.5' height='2.5' fill='#c89010'/><rect x='0.5' y='17.0' width='9.5' height='2.5' fill='#ffc820'/><rect x='0.5' y='19.5' width='9.5' height='2.5' fill='#c89010'/><rect x='0.5' y='22.0' width='9.5' height='2.5' fill='#ffc820'/></svg>
<div class='t' style='left:1322px;top:103.4px;width:107px;overflow:hidden'><span style='display:inline-block;transform:scaleX(0.975);transform-origin:0 0'>1 - 10</span></div>
<div class='a' style='left:0;top:138.60000000000002px;width:2533px;height:46.7px;background:linear-gradient(to bottom,#4b4949 0px,#555353 23px,#4a4848 23px,#3d3b3b 40px,#3d3b3b 46px)'></div>
<div class='t' style='left:17px;top:149.60000000000002px;width:212px;overflow:hidden'><span style='display:inline-block;transform:scaleX(0.975);transform-origin:0 0'>Burn in - GL (40)</span></div>
<div class='t' style='left:242px;top:149.60000000000002px;width:137px;overflow:hidden'><span style='display:inline-block;transform:scaleX(0.975);transform-origin:0 0'>Localization</span></div>
<div class='t' style='left:392px;top:149.60000000000002px;width:212px;overflow:hidden'><span style='display:inline-block;transform:scaleX(0.975);transform-origin:0 0'>US Dollar</span></div>
<div class='t' style='left:617px;top:149.60000000000002px;width:137px;overflow:hidden'><span style='display:inline-block;transform:scaleX(0.975);transform-origin:0 0'>Min</span></div>
<svg class='a' style='left:767px;top:147.10000000000002px' width='24' height='22' viewBox='0 0 25 23'><path d='M12.5 7 V11 M5 15 V11.5 H19.5 V15' fill='none' stroke='#8a8a8a' stroke-width='1.3'/><rect x='7.5' y='0.5' width='10' height='7.5' rx='1.5' fill='#ffb515'/><rect x='0.5' y='14' width='10' height='7.5' rx='1.5' fill='#ffb515'/><rect x='14.5' y='14' width='10' height='7.5' rx='1.5' fill='#ffb515'/></svg>
<div class='t' style='left:812px;top:149.60000000000002px;width:197px;overflow:hidden'><span style='display:inline-block;transform:scaleX(0.975);transform-origin:0 0'>(2) Multiple</span></div>
<svg class='a' style='left:1022px;top:147.10000000000002px' width='24' height='22' viewBox='0 0 25 23'><path d='M12.5 7 V11 M5 15 V11.5 H19.5 V15' fill='none' stroke='#8a8a8a' stroke-width='1.3'/><rect x='7.5' y='0.5' width='10' height='7.5' rx='1.5' fill='#ffb515'/><rect x='0.5' y='14' width='10' height='7.5' rx='1.5' fill='#ffb515'/><rect x='14.5' y='14' width='10' height='7.5' rx='1.5' fill='#ffb515'/></svg>
<svg class='a' style='left:1279px;top:146.10000000000002px' width='21' height='25' viewBox='0 0 21 25'><circle cx='15.5' cy='4.7' r='4.6' fill='#f0b000'/><circle cx='15.5' cy='4.7' r='2.3' fill='#d89800'/><rect x='10.5' y='9.5' width='10' height='2.5' fill='#c89010'/><rect x='10.5' y='12.0' width='10' height='2.5' fill='#ffc820'/><rect x='10.5' y='14.5' width='10' height='2.5' fill='#c89010'/><rect x='10.5' y='17.0' width='10' height='2.5' fill='#ffc820'/><rect x='10.5' y='19.5' width='10' height='2.5' fill='#c89010'/><rect x='10.5' y='22.0' width='10' height='2.5' fill='#ffc820'/><rect x='0.5' y='14.5' width='9.5' height='2.5' fill='#c89010'/><rect x='0.5' y='17.0' width='9.5' height='2.5' fill='#ffc820'/><rect x='0.5' y='19.5' width='9.5' height='2.5' fill='#c89010'/><rect x='0.5' y='22.0' width='9.5' height='2.5' fill='#ffc820'/></svg>
<div class='t' style='left:1322px;top:149.60000000000002px;width:107px;overflow:hidden'><span style='display:inline-block;transform:scaleX(0.975);transform-origin:0 0'>1</span></div>
<div class='t' style='left:1442px;top:149.60000000000002px;width:122px;overflow:hidden'><span style='display:inline-block;transform:scaleX(0.975);transform-origin:0 0'>5.00</span></div>
<div class='t' style='left:1577px;top:149.60000000000002px;width:122px;overflow:hidden'><span style='display:inline-block;transform:scaleX(0.975);transform-origin:0 0'>0.00</span></div>
<div class='t' style='left:1712px;top:149.60000000000002px;width:126px;overflow:hidden'><span style='display:inline-block;transform:scaleX(0.975);transform-origin:0 0'>0.00</span></div>
<div class='t' style='left:1851px;top:149.60000000000002px;width:122px;overflow:hidden'><span style='display:inline-block;transform:scaleX(0.975);transform-origin:0 0'>0.00</span></div>
<div class='t' style='left:1986px;top:149.60000000000002px;width:122px;overflow:hidden'><span style='display:inline-block;transform:scaleX(0.975);transform-origin:0 0'>0.00</span></div>
<div class='t' style='left:2121px;top:149.60000000000002px;width:122px;overflow:hidden'><span style='display:inline-block;transform:scaleX(0.975);transform-origin:0 0'>0.00</span></div>
<div class='t' style='left:2256px;top:149.60000000000002px;width:212px;overflow:hidden'><span style='display:inline-block;transform:scaleX(0.975);transform-origin:0 0'>OOONA</span></div>
<div class='t' style='left:2481px;top:149.60000000000002px;width:51px;overflow:hidden'><span style='display:inline-block;transform:scaleX(0.975);transform-origin:0 0'>OOONA</span></div>
<div class='a' style='left:0;top:184.8px;width:2533px;height:46.7px;background:#545454'></div>
<div class='t' style='left:17px;top:195.8px;width:212px;overflow:hidden'><span style='display:inline-block;transform:scaleX(0.975);transform-origin:0 0'>Burn in - GL (40)</span></div>
<div class='t' style='left:242px;top:195.8px;width:137px;overflow:hidden'><span style='display:inline-block;transform:scaleX(0.975);transform-origin:0 0'>Localization</span></div>
<div class='t' style='left:392px;top:195.8px;width:212px;overflow:hidden'><span style='display:inline-block;transform:scaleX(0.975);transform-origin:0 0'>US Dollar</span></div>
<div class='t' style='left:617px;top:195.8px;width:137px;overflow:hidden'><span style='display:inline-block;transform:scaleX(0.975);transform-origin:0 0'>Min</span></div>
<svg class='a' style='left:767px;top:193.3px' width='24' height='22' viewBox='0 0 25 23'><path d='M12.5 7 V11 M5 15 V11.5 H19.5 V15' fill='none' stroke='#8a8a8a' stroke-width='1.3'/><rect x='7.5' y='0.5' width='10' height='7.5' rx='1.5' fill='#ffb515'/><rect x='0.5' y='14' width='10' height='7.5' rx='1.5' fill='#ffb515'/><rect x='14.5' y='14' width='10' height='7.5' rx='1.5' fill='#ffb515'/></svg>
<div class='t' style='left:812px;top:195.8px;width:197px;overflow:hidden'><span style='display:inline-block;transform:scaleX(0.975);transform-origin:0 0'>(2) Multiple</span></div>
<svg class='a' style='left:1022px;top:193.3px' width='24' height='22' viewBox='0 0 25 23'><path d='M12.5 7 V11 M5 15 V11.5 H19.5 V15' fill='none' stroke='#8a8a8a' stroke-width='1.3'/><rect x='7.5' y='0.5' width='10' height='7.5' rx='1.5' fill='#ffb515'/><rect x='0.5' y='14' width='10' height='7.5' rx='1.5' fill='#ffb515'/><rect x='14.5' y='14' width='10' height='7.5' rx='1.5' fill='#ffb515'/></svg>
<svg class='a' style='left:1279px;top:192.3px' width='21' height='25' viewBox='0 0 21 25'><circle cx='15.5' cy='4.7' r='4.6' fill='#f0b000'/><circle cx='15.5' cy='4.7' r='2.3' fill='#d89800'/><rect x='10.5' y='9.5' width='10' height='2.5' fill='#c89010'/><rect x='10.5' y='12.0' width='10' height='2.5' fill='#ffc820'/><rect x='10.5' y='14.5' width='10' height='2.5' fill='#c89010'/><rect x='10.5' y='17.0' width='10' height='2.5' fill='#ffc820'/><rect x='10.5' y='19.5' width='10' height='2.5' fill='#c89010'/><rect x='10.5' y='22.0' width='10' height='2.5' fill='#ffc820'/><rect x='0.5' y='14.5' width='9.5' height='2.5' fill='#c89010'/><rect x='0.5' y='17.0' width='9.5' height='2.5' fill='#ffc820'/><rect x='0.5' y='19.5' width='9.5' height='2.5' fill='#c89010'/><rect x='0.5' y='22.0' width='9.5' height='2.5' fill='#ffc820'/></svg>
<div class='t' style='left:1322px;top:195.8px;width:107px;overflow:hidden'><span style='display:inline-block;transform:scaleX(0.975);transform-origin:0 0'>1</span></div>
<div class='t' style='left:1442px;top:195.8px;width:122px;overflow:hidden'><span style='display:inline-block;transform:scaleX(0.975);transform-origin:0 0'>5.00</span></div>
<div class='t' style='left:1577px;top:195.8px;width:122px;overflow:hidden'><span style='display:inline-block;transform:scaleX(0.975);transform-origin:0 0'>0.00</span></div>
<div class='t' style='left:1712px;top:195.8px;width:126px;overflow:hidden'><span style='display:inline-block;transform:scaleX(0.975);transform-origin:0 0'>0.00</span></div>
<div class='t' style='left:1851px;top:195.8px;width:122px;overflow:hidden'><span style='display:inline-block;transform:scaleX(0.975);transform-origin:0 0'>0.00</span></div>
<div class='t' style='left:1986px;top:195.8px;width:122px;overflow:hidden'><span style='display:inline-block;transform:scaleX(0.975);transform-origin:0 0'>0.00</span></div>
<div class='t' style='left:2121px;top:195.8px;width:122px;overflow:hidden'><span style='display:inline-block;transform:scaleX(0.975);transform-origin:0 0'>0.00</span></div>
<div class='t' style='left:2256px;top:195.8px;width:212px;overflow:hidden'><span style='display:inline-block;transform:scaleX(0.975);transform-origin:0 0'>OOONA</span></div>
<div class='a' style='left:0;top:231.0px;width:2533px;height:46.7px;background:#4b4b4b'></div>
<div class='t' style='left:17px;top:242.0px;width:212px;overflow:hidden'><span style='display:inline-block;transform:scaleX(0.975);transform-origin:0 0'>Billing Product 1 - GL (1...</span></div>
<div class='t' style='left:242px;top:242.0px;width:137px;overflow:hidden'><span style='display:inline-block;transform:scaleX(0.975);transform-origin:0 0'>Localization</span></div>
<div class='t' style='left:392px;top:242.0px;width:212px;overflow:hidden'><span style='display:inline-block;transform:scaleX(0.975);transform-origin:0 0'>Euro</span></div>
<div class='t' style='left:617px;top:242.0px;width:137px;overflow:hidden'><span style='display:inline-block;transform:scaleX(0.975);transform-origin:0 0'>Min</span></div>
<svg class='a' style='left:767px;top:239.5px' width='24' height='22' viewBox='0 0 25 23'><path d='M12.5 7 V11 M5 15 V11.5 H19.5 V15' fill='none' stroke='#8a8a8a' stroke-width='1.3'/><rect x='7.5' y='0.5' width='10' height='7.5' rx='1.5' fill='#ffb515'/><rect x='0.5' y='14' width='10' height='7.5' rx='1.5' fill='#ffb515'/><rect x='14.5' y='14' width='10' height='7.5' rx='1.5' fill='#ffb515'/></svg>
<svg class='a' style='left:1022px;top:239.5px' width='24' height='22' viewBox='0 0 25 23'><path d='M12.5 7 V11 M5 15 V11.5 H19.5 V15' fill='none' stroke='#8a8a8a' stroke-width='1.3'/><rect x='7.5' y='0.5' width='10' height='7.5' rx='1.5' fill='#ffb515'/><rect x='0.5' y='14' width='10' height='7.5' rx='1.5' fill='#ffb515'/><rect x='14.5' y='14' width='10' height='7.5' rx='1.5' fill='#ffb515'/></svg>
<svg class='a' style='left:1279px;top:238.5px' width='21' height='25' viewBox='0 0 21 25'><circle cx='15.5' cy='4.7' r='4.6' fill='#f0b000'/><circle cx='15.5' cy='4.7' r='2.3' fill='#d89800'/><rect x='10.5' y='9.5' width='10' height='2.5' fill='#c89010'/><rect x='10.5' y='12.0' width='10' height='2.5' fill='#ffc820'/><rect x='10.5' y='14.5' width='10' height='2.5' fill='#c89010'/><rect x='10.5' y='17.0' width='10' height='2.5' fill='#ffc820'/><rect x='10.5' y='19.5' width='10' height='2.5' fill='#c89010'/><rect x='10.5' y='22.0' width='10' height='2.5' fill='#ffc820'/><rect x='0.5' y='14.5' width='9.5' height='2.5' fill='#c89010'/><rect x='0.5' y='17.0' width='9.5' height='2.5' fill='#ffc820'/><rect x='0.5' y='19.5' width='9.5' height='2.5' fill='#c89010'/><rect x='0.5' y='22.0' width='9.5' height='2.5' fill='#ffc820'/></svg>
<div class='t' style='left:1322px;top:242.0px;width:107px;overflow:hidden'><span style='display:inline-block;transform:scaleX(0.975);transform-origin:0 0'>1</span></div>
<div class='t' style='left:1442px;top:242.0px;width:122px;overflow:hidden'><span style='display:inline-block;transform:scaleX(0.975);transform-origin:0 0'>10.00</span></div>
<div class='t' style='left:1577px;top:242.0px;width:122px;overflow:hidden'><span style='display:inline-block;transform:scaleX(0.975);transform-origin:0 0'>10.00</span></div>
<div class='t' style='left:1712px;top:242.0px;width:126px;overflow:hidden'><span style='display:inline-block;transform:scaleX(0.975);transform-origin:0 0'>10.00</span></div>
<div class='t' style='left:1851px;top:242.0px;width:122px;overflow:hidden'><span style='display:inline-block;transform:scaleX(0.975);transform-origin:0 0'>0.00</span></div>
<div class='t' style='left:1986px;top:242.0px;width:122px;overflow:hidden'><span style='display:inline-block;transform:scaleX(0.975);transform-origin:0 0'>0.00</span></div>
<div class='t' style='left:2121px;top:242.0px;width:122px;overflow:hidden'><span style='display:inline-block;transform:scaleX(0.975);transform-origin:0 0'>0.00</span></div>
<div class='t' style='left:2481px;top:242.0px;width:51px;overflow:hidden'><span style='display:inline-block;transform:scaleX(0.975);transform-origin:0 0'>Mr Billing</span></div>
<div class='a' style='left:0;top:277.20000000000005px;width:2533px;height:46.7px;background:#545454'></div>
<div class='t' style='left:17px;top:288.20000000000005px;width:212px;overflow:hidden'><span style='display:inline-block;transform:scaleX(0.975);transform-origin:0 0'>Billing Product 2 - GL (1...</span></div>
<div class='t' style='left:242px;top:288.20000000000005px;width:137px;overflow:hidden'><span style='display:inline-block;transform:scaleX(0.975);transform-origin:0 0'>Localization</span></div>
<div class='t' style='left:392px;top:288.20000000000005px;width:212px;overflow:hidden'><span style='display:inline-block;transform:scaleX(0.975);transform-origin:0 0'>Euro</span></div>
<div class='t' style='left:617px;top:288.20000000000005px;width:137px;overflow:hidden'><span style='display:inline-block;transform:scaleX(0.975);transform-origin:0 0'>Min</span></div>
<svg class='a' style='left:767px;top:285.70000000000005px' width='24' height='22' viewBox='0 0 25 23'><path d='M12.5 7 V11 M5 15 V11.5 H19.5 V15' fill='none' stroke='#8a8a8a' stroke-width='1.3'/><rect x='7.5' y='0.5' width='10' height='7.5' rx='1.5' fill='#ffb515'/><rect x='0.5' y='14' width='10' height='7.5' rx='1.5' fill='#ffb515'/><rect x='14.5' y='14' width='10' height='7.5' rx='1.5' fill='#ffb515'/></svg>
<svg class='a' style='left:1022px;top:285.70000000000005px' width='24' height='22' viewBox='0 0 25 23'><path d='M12.5 7 V11 M5 15 V11.5 H19.5 V15' fill='none' stroke='#8a8a8a' stroke-width='1.3'/><rect x='7.5' y='0.5' width='10' height='7.5' rx='1.5' fill='#ffb515'/><rect x='0.5' y='14' width='10' height='7.5' rx='1.5' fill='#ffb515'/><rect x='14.5' y='14' width='10' height='7.5' rx='1.5' fill='#ffb515'/></svg>
<svg class='a' style='left:1279px;top:284.70000000000005px' width='21' height='25' viewBox='0 0 21 25'><circle cx='15.5' cy='4.7' r='4.6' fill='#f0b000'/><circle cx='15.5' cy='4.7' r='2.3' fill='#d89800'/><rect x='10.5' y='9.5' width='10' height='2.5' fill='#c89010'/><rect x='10.5' y='12.0' width='10' height='2.5' fill='#ffc820'/><rect x='10.5' y='14.5' width='10' height='2.5' fill='#c89010'/><rect x='10.5' y='17.0' width='10' height='2.5' fill='#ffc820'/><rect x='10.5' y='19.5' width='10' height='2.5' fill='#c89010'/><rect x='10.5' y='22.0' width='10' height='2.5' fill='#ffc820'/><rect x='0.5' y='14.5' width='9.5' height='2.5' fill='#c89010'/><rect x='0.5' y='17.0' width='9.5' height='2.5' fill='#ffc820'/><rect x='0.5' y='19.5' width='9.5' height='2.5' fill='#c89010'/><rect x='0.5' y='22.0' width='9.5' height='2.5' fill='#ffc820'/></svg>
<div class='t' style='left:1322px;top:288.20000000000005px;width:107px;overflow:hidden'><span style='display:inline-block;transform:scaleX(0.975);transform-origin:0 0'>1</span></div>
<div class='t' style='left:1442px;top:288.20000000000005px;width:122px;overflow:hidden'><span style='display:inline-block;transform:scaleX(0.975);transform-origin:0 0'>8.00</span></div>
<div class='t' style='left:1577px;top:288.20000000000005px;width:122px;overflow:hidden'><span style='display:inline-block;transform:scaleX(0.975);transform-origin:0 0'>8.00</span></div>
<div class='t' style='left:1712px;top:288.20000000000005px;width:126px;overflow:hidden'><span style='display:inline-block;transform:scaleX(0.975);transform-origin:0 0'>8.00</span></div>
<div class='t' style='left:1851px;top:288.20000000000005px;width:122px;overflow:hidden'><span style='display:inline-block;transform:scaleX(0.975);transform-origin:0 0'>0.00</span></div>
<div class='t' style='left:1986px;top:288.20000000000005px;width:122px;overflow:hidden'><span style='display:inline-block;transform:scaleX(0.975);transform-origin:0 0'>0.00</span></div>
<div class='t' style='left:2121px;top:288.20000000000005px;width:122px;overflow:hidden'><span style='display:inline-block;transform:scaleX(0.975);transform-origin:0 0'>0.00</span></div>
<div class='t' style='left:2481px;top:288.20000000000005px;width:51px;overflow:hidden'><span style='display:inline-block;transform:scaleX(0.975);transform-origin:0 0'>Mr Billing</span></div>
<div class='a' style='left:0;top:323.40000000000003px;width:2533px;height:46.7px;background:#4b4b4b'></div>
<div class='t' style='left:17px;top:334.40000000000003px;width:212px;overflow:hidden'><span style='display:inline-block;transform:scaleX(0.975);transform-origin:0 0'>Billing Product 3 - GL (1...</span></div>
<div class='t' style='left:242px;top:334.40000000000003px;width:137px;overflow:hidden'><span style='display:inline-block;transform:scaleX(0.975);transform-origin:0 0'>Localization</span></div>
<div class='t' style='left:392px;top:334.40000000000003px;width:212px;overflow:hidden'><span style='display:inline-block;transform:scaleX(0.975);transform-origin:0 0'>Euro</span></div>
<div class='t' style='left:617px;top:334.40000000000003px;width:137px;overflow:hidden'><span style='display:inline-block;transform:scaleX(0.975);transform-origin:0 0'>Min</span></div>
<svg class='a' style='left:767px;top:331.90000000000003px' width='24' height='22' viewBox='0 0 25 23'><path d='M12.5 7 V11 M5 15 V11.5 H19.5 V15' fill='none' stroke='#8a8a8a' stroke-width='1.3'/><rect x='7.5' y='0.5' width='10' height='7.5' rx='1.5' fill='#ffb515'/><rect x='0.5' y='14' width='10' height='7.5' rx='1.5' fill='#ffb515'/><rect x='14.5' y='14' width='10' height='7.5' rx='1.5' fill='#ffb515'/></svg>
<svg class='a' style='left:1022px;top:331.90000000000003px' width='24' height='22' viewBox='0 0 25 23'><path d='M12.5 7 V11 M5 15 V11.5 H19.5 V15' fill='none' stroke='#8a8a8a' stroke-width='1.3'/><rect x='7.5' y='0.5' width='10' height='7.5' rx='1.5' fill='#ffb515'/><rect x='0.5' y='14' width='10' height='7.5' rx='1.5' fill='#ffb515'/><rect x='14.5' y='14' width='10' height='7.5' rx='1.5' fill='#ffb515'/></svg>
<svg class='a' style='left:1279px;top:330.90000000000003px' width='21' height='25' viewBox='0 0 21 25'><circle cx='15.5' cy='4.7' r='4.6' fill='#f0b000'/><circle cx='15.5' cy='4.7' r='2.3' fill='#d89800'/><rect x='10.5' y='9.5' width='10' height='2.5' fill='#c89010'/><rect x='10.5' y='12.0' width='10' height='2.5' fill='#ffc820'/><rect x='10.5' y='14.5' width='10' height='2.5' fill='#c89010'/><rect x='10.5' y='17.0' width='10' height='2.5' fill='#ffc820'/><rect x='10.5' y='19.5' width='10' height='2.5' fill='#c89010'/><rect x='10.5' y='22.0' width='10' height='2.5' fill='#ffc820'/><rect x='0.5' y='14.5' width='9.5' height='2.5' fill='#c89010'/><rect x='0.5' y='17.0' width='9.5' height='2.5' fill='#ffc820'/><rect x='0.5' y='19.5' width='9.5' height='2.5' fill='#c89010'/><rect x='0.5' y='22.0' width='9.5' height='2.5' fill='#ffc820'/></svg>
<div class='t' style='left:1322px;top:334.40000000000003px;width:107px;overflow:hidden'><span style='display:inline-block;transform:scaleX(0.975);transform-origin:0 0'>1</span></div>
<div class='t' style='left:1442px;top:334.40000000000003px;width:122px;overflow:hidden'><span style='display:inline-block;transform:scaleX(0.975);transform-origin:0 0'>6.00</span></div>
<div class='t' style='left:1577px;top:334.40000000000003px;width:122px;overflow:hidden'><span style='display:inline-block;transform:scaleX(0.975);transform-origin:0 0'>6.00</span></div>
<div class='t' style='left:1712px;top:334.40000000000003px;width:126px;overflow:hidden'><span style='display:inline-block;transform:scaleX(0.975);transform-origin:0 0'>6.00</span></div>
<div class='t' style='left:1851px;top:334.40000000000003px;width:122px;overflow:hidden'><span style='display:inline-block;transform:scaleX(0.975);transform-origin:0 0'>0.00</span></div>
<div class='t' style='left:1986px;top:334.40000000000003px;width:122px;overflow:hidden'><span style='display:inline-block;transform:scaleX(0.975);transform-origin:0 0'>0.00</span></div>
<div class='t' style='left:2121px;top:334.40000000000003px;width:122px;overflow:hidden'><span style='display:inline-block;transform:scaleX(0.975);transform-origin:0 0'>0.00</span></div>
<div class='t' style='left:2481px;top:334.40000000000003px;width:51px;overflow:hidden'><span style='display:inline-block;transform:scaleX(0.975);transform-origin:0 0'>Mr Billing</span></div>
<div class='a' style='left:0;top:369.6px;width:2533px;height:46.7px;background:#545454'></div>
<div class='t' style='left:17px;top:380.6px;width:212px;overflow:hidden'><span style='display:inline-block;transform:scaleX(0.975);transform-origin:0 0'>Document translation -...</span></div>
<div class='t' style='left:242px;top:380.6px;width:137px;overflow:hidden'><span style='display:inline-block;transform:scaleX(0.975);transform-origin:0 0'>Documents</span></div>
<div class='t' style='left:392px;top:380.6px;width:212px;overflow:hidden'><span style='display:inline-block;transform:scaleX(0.975);transform-origin:0 0'>Euro</span></div>
<div class='t' style='left:617px;top:380.6px;width:137px;overflow:hidden'><span style='display:inline-block;transform:scaleX(0.975);transform-origin:0 0'>Words</span></div>
<svg class='a' style='left:767px;top:378.1px' width='24' height='22' viewBox='0 0 25 23'><path d='M12.5 7 V11 M5 15 V11.5 H19.5 V15' fill='none' stroke='#8a8a8a' stroke-width='1.3'/><rect x='7.5' y='0.5' width='10' height='7.5' rx='1.5' fill='#ffb515'/><rect x='0.5' y='14' width='10' height='7.5' rx='1.5' fill='#ffb515'/><rect x='14.5' y='14' width='10' height='7.5' rx='1.5' fill='#ffb515'/></svg>
<svg class='a' style='left:1022px;top:378.1px' width='24' height='22' viewBox='0 0 25 23'><path d='M12.5 7 V11 M5 15 V11.5 H19.5 V15' fill='none' stroke='#8a8a8a' stroke-width='1.3'/><rect x='7.5' y='0.5' width='10' height='7.5' rx='1.5' fill='#ffb515'/><rect x='0.5' y='14' width='10' height='7.5' rx='1.5' fill='#ffb515'/><rect x='14.5' y='14' width='10' height='7.5' rx='1.5' fill='#ffb515'/></svg>
<svg class='a' style='left:1279px;top:377.1px' width='21' height='25' viewBox='0 0 21 25'><circle cx='15.5' cy='4.7' r='4.6' fill='#f0b000'/><circle cx='15.5' cy='4.7' r='2.3' fill='#d89800'/><rect x='10.5' y='9.5' width='10' height='2.5' fill='#c89010'/><rect x='10.5' y='12.0' width='10' height='2.5' fill='#ffc820'/><rect x='10.5' y='14.5' width='10' height='2.5' fill='#c89010'/><rect x='10.5' y='17.0' width='10' height='2.5' fill='#ffc820'/><rect x='10.5' y='19.5' width='10' height='2.5' fill='#c89010'/><rect x='10.5' y='22.0' width='10' height='2.5' fill='#ffc820'/><rect x='0.5' y='14.5' width='9.5' height='2.5' fill='#c89010'/><rect x='0.5' y='17.0' width='9.5' height='2.5' fill='#ffc820'/><rect x='0.5' y='19.5' width='9.5' height='2.5' fill='#c89010'/><rect x='0.5' y='22.0' width='9.5' height='2.5' fill='#ffc820'/></svg>
<div class='t' style='left:1322px;top:380.6px;width:107px;overflow:hidden'><span style='display:inline-block;transform:scaleX(0.975);transform-origin:0 0'>1</span></div>
<div class='t' style='left:1442px;top:380.6px;width:122px;overflow:hidden'><span style='display:inline-block;transform:scaleX(0.975);transform-origin:0 0'>10.00</span></div>
<div class='t' style='left:1577px;top:380.6px;width:122px;overflow:hidden'><span style='display:inline-block;transform:scaleX(0.975);transform-origin:0 0'>10.00</span></div>
<div class='t' style='left:1712px;top:380.6px;width:126px;overflow:hidden'><span style='display:inline-block;transform:scaleX(0.975);transform-origin:0 0'>10.00</span></div>
<div class='t' style='left:1851px;top:380.6px;width:122px;overflow:hidden'><span style='display:inline-block;transform:scaleX(0.975);transform-origin:0 0'>0.00</span></div>
<div class='t' style='left:1986px;top:380.6px;width:122px;overflow:hidden'><span style='display:inline-block;transform:scaleX(0.975);transform-origin:0 0'>0.00</span></div>
<div class='t' style='left:2121px;top:380.6px;width:122px;overflow:hidden'><span style='display:inline-block;transform:scaleX(0.975);transform-origin:0 0'>0.00</span></div>
<div class='a' style='left:0;top:415.8px;width:2533px;height:46.7px;background:#4b4b4b'></div>
<div class='t' style='left:17px;top:426.8px;width:212px;overflow:hidden'><span style='display:inline-block;transform:scaleX(0.975);transform-origin:0 0'>EMT - CU (58)</span></div>
<div class='t' style='left:242px;top:426.8px;width:137px;overflow:hidden'><span style='display:inline-block;transform:scaleX(0.975);transform-origin:0 0'>Localization</span></div>
<div class='t' style='left:392px;top:426.8px;width:212px;overflow:hidden'><span style='display:inline-block;transform:scaleX(0.975);transform-origin:0 0'>Euro</span></div>
<div class='t' style='left:617px;top:426.8px;width:137px;overflow:hidden'><span style='display:inline-block;transform:scaleX(0.975);transform-origin:0 0'>Min</span></div>
<svg class='a' style='left:767px;top:424.3px' width='24' height='22' viewBox='0 0 25 23'><path d='M12.5 7 V11 M5 15 V11.5 H19.5 V15' fill='none' stroke='#8a8a8a' stroke-width='1.3'/><rect x='7.5' y='0.5' width='10' height='7.5' rx='1.5' fill='#ffb515'/><rect x='0.5' y='14' width='10' height='7.5' rx='1.5' fill='#ffb515'/><rect x='14.5' y='14' width='10' height='7.5' rx='1.5' fill='#ffb515'/></svg>
<div class='t' style='left:812px;top:426.8px;width:197px;overflow:hidden'><span style='display:inline-block;transform:scaleX(0.975);transform-origin:0 0'>(48) Multiple</span></div>
<svg class='a' style='left:1022px;top:424.3px' width='24' height='22' viewBox='0 0 25 23'><path d='M12.5 7 V11 M5 15 V11.5 H19.5 V15' fill='none' stroke='#8a8a8a' stroke-width='1.3'/><rect x='7.5' y='0.5' width='10' height='7.5' rx='1.5' fill='#ffb515'/><rect x='0.5' y='14' width='10' height='7.5' rx='1.5' fill='#ffb515'/><rect x='14.5' y='14' width='10' height='7.5' rx='1.5' fill='#ffb515'/></svg>
<div class='t' style='left:1067px;top:426.8px;width:197px;overflow:hidden'><span style='display:inline-block;transform:scaleX(0.975);transform-origin:0 0'>(50) Multiple</span></div>
<svg class='a' style='left:1279px;top:423.3px' width='21' height='25' viewBox='0 0 21 25'><circle cx='15.5' cy='4.7' r='4.6' fill='#f0b000'/><circle cx='15.5' cy='4.7' r='2.3' fill='#d89800'/><rect x='10.5' y='9.5' width='10' height='2.5' fill='#c89010'/><rect x='10.5' y='12.0' width='10' height='2.5' fill='#ffc820'/><rect x='10.5' y='14.5' width='10' height='2.5' fill='#c89010'/><rect x='10.5' y='17.0' width='10' height='2.5' fill='#ffc820'/><rect x='10.5' y='19.5' width='10' height='2.5' fill='#c89010'/><rect x='10.5' y='22.0' width='10' height='2.5' fill='#ffc820'/><rect x='0.5' y='14.5' width='9.5' height='2.5' fill='#c89010'/><rect x='0.5' y='17.0' width='9.5' height='2.5' fill='#ffc820'/><rect x='0.5' y='19.5' width='9.5' height='2.5' fill='#c89010'/><rect x='0.5' y='22.0' width='9.5' height='2.5' fill='#ffc820'/></svg>
<div class='t' style='left:1322px;top:426.8px;width:107px;overflow:hidden'><span style='display:inline-block;transform:scaleX(0.975);transform-origin:0 0'>1</span></div>
<div class='t' style='left:1442px;top:426.8px;width:122px;overflow:hidden'><span style='display:inline-block;transform:scaleX(0.975);transform-origin:0 0'>4.50</span></div>
<div class='t' style='left:1577px;top:426.8px;width:122px;overflow:hidden'><span style='display:inline-block;transform:scaleX(0.975);transform-origin:0 0'>4.50</span></div>
<div class='t' style='left:1712px;top:426.8px;width:126px;overflow:hidden'><span style='display:inline-block;transform:scaleX(0.975);transform-origin:0 0'>4.50</span></div>
<div class='t' style='left:1851px;top:426.8px;width:122px;overflow:hidden'><span style='display:inline-block;transform:scaleX(0.975);transform-origin:0 0'>0.00</span></div>
<div class='t' style='left:1986px;top:426.8px;width:122px;overflow:hidden'><span style='display:inline-block;transform:scaleX(0.975);transform-origin:0 0'>0.00</span></div>
<div class='t' style='left:2121px;top:426.8px;width:122px;overflow:hidden'><span style='display:inline-block;transform:scaleX(0.975);transform-origin:0 0'>0.00</span></div>
<div class='t' style='left:2481px;top:426.8px;width:51px;overflow:hidden'><span style='display:inline-block;transform:scaleX(0.975);transform-origin:0 0'>Tony Mo</span></div>
<div class='a' style='left:0;top:462.0px;width:2533px;height:46.7px;background:#545454'></div>
<div class='t' style='left:17px;top:473.0px;width:212px;overflow:hidden'><span style='display:inline-block;transform:scaleX(0.975);transform-origin:0 0'>EMT - CU (58)</span></div>
<div class='t' style='left:242px;top:473.0px;width:137px;overflow:hidden'><span style='display:inline-block;transform:scaleX(0.975);transform-origin:0 0'>Localization</span></div>
<div class='t' style='left:392px;top:473.0px;width:212px;overflow:hidden'><span style='display:inline-block;transform:scaleX(0.975);transform-origin:0 0'>Euro</span></div>
<div class='t' style='left:617px;top:473.0px;width:137px;overflow:hidden'><span style='display:inline-block;transform:scaleX(0.975);transform-origin:0 0'>Min</span></div>
<svg class='a' style='left:767px;top:470.5px' width='24' height='22' viewBox='0 0 25 23'><path d='M12.5 7 V11 M5 15 V11.5 H19.5 V15' fill='none' stroke='#8a8a8a' stroke-width='1.3'/><rect x='7.5' y='0.5' width='10' height='7.5' rx='1.5' fill='#ffb515'/><rect x='0.5' y='14' width='10' height='7.5' rx='1.5' fill='#ffb515'/><rect x='14.5' y='14' width='10' height='7.5' rx='1.5' fill='#ffb515'/></svg>
<div class='t' style='left:812px;top:473.0px;width:197px;overflow:hidden'><span style='display:inline-block;transform:scaleX(0.975);transform-origin:0 0'>English</span></div>
<svg class='a' style='left:1022px;top:470.5px' width='24' height='22' viewBox='0 0 25 23'><path d='M12.5 7 V11 M5 15 V11.5 H19.5 V15' fill='none' stroke='#8a8a8a' stroke-width='1.3'/><rect x='7.5' y='0.5' width='10' height='7.5' rx='1.5' fill='#ffb515'/><rect x='0.5' y='14' width='10' height='7.5' rx='1.5' fill='#ffb515'/><rect x='14.5' y='14' width='10' height='7.5' rx='1.5' fill='#ffb515'/></svg>
<div class='t' style='left:1067px;top:473.0px;width:197px;overflow:hidden'><span style='display:inline-block;transform:scaleX(0.975);transform-origin:0 0'>English</span></div>
<svg class='a' style='left:1279px;top:469.5px' width='21' height='25' viewBox='0 0 21 25'><circle cx='15.5' cy='4.7' r='4.6' fill='#f0b000'/><circle cx='15.5' cy='4.7' r='2.3' fill='#d89800'/><rect x='10.5' y='9.5' width='10' height='2.5' fill='#c89010'/><rect x='10.5' y='12.0' width='10' height='2.5' fill='#ffc820'/><rect x='10.5' y='14.5' width='10' height='2.5' fill='#c89010'/><rect x='10.5' y='17.0' width='10' height='2.5' fill='#ffc820'/><rect x='10.5' y='19.5' width='10' height='2.5' fill='#c89010'/><rect x='10.5' y='22.0' width='10' height='2.5' fill='#ffc820'/><rect x='0.5' y='14.5' width='9.5' height='2.5' fill='#c89010'/><rect x='0.5' y='17.0' width='9.5' height='2.5' fill='#ffc820'/><rect x='0.5' y='19.5' width='9.5' height='2.5' fill='#c89010'/><rect x='0.5' y='22.0' width='9.5' height='2.5' fill='#ffc820'/></svg>
<div class='t' style='left:1322px;top:473.0px;width:107px;overflow:hidden'><span style='display:inline-block;transform:scaleX(0.975);transform-origin:0 0'>1</span></div>
<div class='t' style='left:1442px;top:473.0px;width:122px;overflow:hidden'><span style='display:inline-block;transform:scaleX(0.975);transform-origin:0 0'>4.50</span></div>
<div class='t' style='left:1577px;top:473.0px;width:122px;overflow:hidden'><span style='display:inline-block;transform:scaleX(0.975);transform-origin:0 0'>4.50</span></div>
<div class='t' style='left:1712px;top:473.0px;width:126px;overflow:hidden'><span style='display:inline-block;transform:scaleX(0.975);transform-origin:0 0'>4.50</span></div>
<div class='t' style='left:1851px;top:473.0px;width:122px;overflow:hidden'><span style='display:inline-block;transform:scaleX(0.975);transform-origin:0 0'>0.00</span></div>
<div class='t' style='left:1986px;top:473.0px;width:122px;overflow:hidden'><span style='display:inline-block;transform:scaleX(0.975);transform-origin:0 0'>0.00</span></div>
<div class='t' style='left:2121px;top:473.0px;width:122px;overflow:hidden'><span style='display:inline-block;transform:scaleX(0.975);transform-origin:0 0'>0.00</span></div>
<div class='t' style='left:2481px;top:473.0px;width:51px;overflow:hidden'><span style='display:inline-block;transform:scaleX(0.975);transform-origin:0 0'>Demo Customer</span></div>
<div class='a' style='left:0;top:508.20000000000005px;width:2533px;height:46.7px;background:#4b4b4b'></div>
<div class='t' style='left:17px;top:519.2px;width:212px;overflow:hidden'><span style='display:inline-block;transform:scaleX(0.975);transform-origin:0 0'>Subtitle - CU (72)</span></div>
<div class='t' style='left:242px;top:519.2px;width:137px;overflow:hidden'><span style='display:inline-block;transform:scaleX(0.975);transform-origin:0 0'>Localization</span></div>
<div class='t' style='left:392px;top:519.2px;width:212px;overflow:hidden'><span style='display:inline-block;transform:scaleX(0.975);transform-origin:0 0'>US Dollar</span></div>
<div class='t' style='left:617px;top:519.2px;width:137px;overflow:hidden'><span style='display:inline-block;transform:scaleX(0.975);transform-origin:0 0'>Min</span></div>
<svg class='a' style='left:767px;top:516.7px' width='24' height='22' viewBox='0 0 25 23'><path d='M12.5 7 V11 M5 15 V11.5 H19.5 V15' fill='none' stroke='#8a8a8a' stroke-width='1.3'/><rect x='7.5' y='0.5' width='10' height='7.5' rx='1.5' fill='#ffb515'/><rect x='0.5' y='14' width='10' height='7.5' rx='1.5' fill='#ffb515'/><rect x='14.5' y='14' width='10' height='7.5' rx='1.5' fill='#ffb515'/></svg>
<div class='t' style='left:812px;top:519.2px;width:197px;overflow:hidden'><span style='display:inline-block;transform:scaleX(0.975);transform-origin:0 0'>English</span></div>
<svg class='a' style='left:1022px;top:516.7px' width='24' height='22' viewBox='0 0 25 23'><path d='M12.5 7 V11 M5 15 V11.5 H19.5 V15' fill='none' stroke='#8a8a8a' stroke-width='1.3'/><rect x='7.5' y='0.5' width='10' height='7.5' rx='1.5' fill='#ffb515'/><rect x='0.5' y='14' width='10' height='7.5' rx='1.5' fill='#ffb515'/><rect x='14.5' y='14' width='10' height='7.5' rx='1.5' fill='#ffb515'/></svg>
<div class='t' style='left:1067px;top:519.2px;width:197px;overflow:hidden'><span style='display:inline-block;transform:scaleX(0.975);transform-origin:0 0'>(2) Multiple</span></div>
<svg class='a' style='left:1279px;top:515.7px' width='21' height='25' viewBox='0 0 21 25'><circle cx='15.5' cy='4.7' r='4.6' fill='#f0b000'/><circle cx='15.5' cy='4.7' r='2.3' fill='#d89800'/><rect x='10.5' y='9.5' width='10' height='2.5' fill='#c89010'/><rect x='10.5' y='12.0' width='10' height='2.5' fill='#ffc820'/><rect x='10.5' y='14.5' width='10' height='2.5' fill='#c89010'/><rect x='10.5' y='17.0' width='10' height='2.5' fill='#ffc820'/><rect x='10.5' y='19.5' width='10' height='2.5' fill='#c89010'/><rect x='10.5' y='22.0' width='10' height='2.5' fill='#ffc820'/><rect x='0.5' y='14.5' width='9.5' height='2.5' fill='#c89010'/><rect x='0.5' y='17.0' width='9.5' height='2.5' fill='#ffc820'/><rect x='0.5' y='19.5' width='9.5' height='2.5' fill='#c89010'/><rect x='0.5' y='22.0' width='9.5' height='2.5' fill='#ffc820'/></svg>
<div class='t' style='left:1322px;top:519.2px;width:107px;overflow:hidden'><span style='display:inline-block;transform:scaleX(0.975);transform-origin:0 0'>1</span></div>
<div class='t' style='left:1442px;top:519.2px;width:122px;overflow:hidden'><span style='display:inline-block;transform:scaleX(0.975);transform-origin:0 0'>10.00</span></div>
<div class='t' style='left:1577px;top:519.2px;width:122px;overflow:hidden'><span style='display:inline-block;transform:scaleX(0.975);transform-origin:0 0'>10.00</span></div>
<div class='t' style='left:1712px;top:519.2px;width:126px;overflow:hidden'><span style='display:inline-block;transform:scaleX(0.975);transform-origin:0 0'>10.00</span></div>
<div class='t' style='left:1851px;top:519.2px;width:122px;overflow:hidden'><span style='display:inline-block;transform:scaleX(0.975);transform-origin:0 0'>0.00</span></div>
<div class='t' style='left:1986px;top:519.2px;width:122px;overflow:hidden'><span style='display:inline-block;transform:scaleX(0.975);transform-origin:0 0'>0.00</span></div>
<div class='t' style='left:2121px;top:519.2px;width:122px;overflow:hidden'><span style='display:inline-block;transform:scaleX(0.975);transform-origin:0 0'>0.00</span></div>
<div class='t' style='left:2256px;top:519.2px;width:212px;overflow:hidden'><span style='display:inline-block;transform:scaleX(0.975);transform-origin:0 0'>Maya's consolidated ac...</span></div>
<div class='t' style='left:2481px;top:519.2px;width:51px;overflow:hidden'><span style='display:inline-block;transform:scaleX(0.975);transform-origin:0 0'>Maya Mayer</span></div>
<div class='a' style='left:0;top:554.4000000000001px;width:2533px;height:46.7px;background:#545454'></div>
<div class='t' style='left:17px;top:565.4000000000001px;width:212px;overflow:hidden'><span style='display:inline-block;transform:scaleX(0.975);transform-origin:0 0'>Subtitles - GL (78)</span></div>
<div class='t' style='left:242px;top:565.4000000000001px;width:137px;overflow:hidden'><span style='display:inline-block;transform:scaleX(0.975);transform-origin:0 0'>Localization</span></div>
<div class='t' style='left:392px;top:565.4000000000001px;width:212px;overflow:hidden'><span style='display:inline-block;transform:scaleX(0.975);transform-origin:0 0'>New Israeli Sheqel</span></div>
<div class='t' style='left:617px;top:565.4000000000001px;width:137px;overflow:hidden'><span style='display:inline-block;transform:scaleX(0.975);transform-origin:0 0'>Min</span></div>
<svg class='a' style='left:767px;top:562.9000000000001px' width='24' height='22' viewBox='0 0 25 23'><path d='M12.5 7 V11 M5 15 V11.5 H19.5 V15' fill='none' stroke='#8a8a8a' stroke-width='1.3'/><rect x='7.5' y='0.5' width='10' height='7.5' rx='1.5' fill='#ffb515'/><rect x='0.5' y='14' width='10' height='7.5' rx='1.5' fill='#ffb515'/><rect x='14.5' y='14' width='10' height='7.5' rx='1.5' fill='#ffb515'/></svg>
<div class='t' style='left:812px;top:565.4000000000001px;width:197px;overflow:hidden'><span style='display:inline-block;transform:scaleX(0.975);transform-origin:0 0'>English</span></div>
<svg class='a' style='left:1022px;top:562.9000000000001px' width='24' height='22' viewBox='0 0 25 23'><path d='M12.5 7 V11 M5 15 V11.5 H19.5 V15' fill='none' stroke='#8a8a8a' stroke-width='1.3'/><rect x='7.5' y='0.5' width='10' height='7.5' rx='1.5' fill='#ffb515'/><rect x='0.5' y='14' width='10' height='7.5' rx='1.5' fill='#ffb515'/><rect x='14.5' y='14' width='10' height='7.5' rx='1.5' fill='#ffb515'/></svg>
<div class='t' style='left:1067px;top:565.4000000000001px;width:197px;overflow:hidden'><span style='display:inline-block;transform:scaleX(0.975);transform-origin:0 0'>(2) Multiple</span></div>
<svg class='a' style='left:1279px;top:561.9000000000001px' width='21' height='25' viewBox='0 0 21 25'><circle cx='15.5' cy='4.7' r='4.6' fill='#f0b000'/><circle cx='15.5' cy='4.7' r='2.3' fill='#d89800'/><rect x='10.5' y='9.5' width='10' height='2.5' fill='#c89010'/><rect x='10.5' y='12.0' width='10' height='2.5' fill='#ffc820'/><rect x='10.5' y='14.5' width='10' height='2.5' fill='#c89010'/><rect x='10.5' y='17.0' width='10' height='2.5' fill='#ffc820'/><rect x='10.5' y='19.5' width='10' height='2.5' fill='#c89010'/><rect x='10.5' y='22.0' width='10' height='2.5' fill='#ffc820'/><rect x='0.5' y='14.5' width='9.5' height='2.5' fill='#c89010'/><rect x='0.5' y='17.0' width='9.5' height='2.5' fill='#ffc820'/><rect x='0.5' y='19.5' width='9.5' height='2.5' fill='#c89010'/><rect x='0.5' y='22.0' width='9.5' height='2.5' fill='#ffc820'/></svg>
<div class='t' style='left:1322px;top:565.4000000000001px;width:107px;overflow:hidden'><span style='display:inline-block;transform:scaleX(0.975);transform-origin:0 0'>1</span></div>
<div class='t' style='left:1442px;top:565.4000000000001px;width:122px;overflow:hidden'><span style='display:inline-block;transform:scaleX(0.975);transform-origin:0 0'>3.00</span></div>
<div class='t' style='left:1577px;top:565.4000000000001px;width:122px;overflow:hidden'><span style='display:inline-block;transform:scaleX(0.975);transform-origin:0 0'>3.00</span></div>
<div class='t' style='left:1712px;top:565.4000000000001px;width:126px;overflow:hidden'><span style='display:inline-block;transform:scaleX(0.975);transform-origin:0 0'>2.00</span></div>
<div class='t' style='left:1851px;top:565.4000000000001px;width:122px;overflow:hidden'><span style='display:inline-block;transform:scaleX(0.975);transform-origin:0 0'>0.00</span></div>
<div class='t' style='left:1986px;top:565.4000000000001px;width:122px;overflow:hidden'><span style='display:inline-block;transform:scaleX(0.975);transform-origin:0 0'>0.00</span></div>
<div class='t' style='left:2121px;top:565.4000000000001px;width:122px;overflow:hidden'><span style='display:inline-block;transform:scaleX(0.975);transform-origin:0 0'>0.00</span></div>
<div class='t' style='left:2256px;top:565.4000000000001px;width:212px;overflow:hidden'><span style='display:inline-block;transform:scaleX(0.975);transform-origin:0 0'>OOONA</span></div>
<div class='t' style='left:2481px;top:565.4000000000001px;width:51px;overflow:hidden'><span style='display:inline-block;transform:scaleX(0.975);transform-origin:0 0'>OOONA</span></div>
<div class='a' style='left:0;top:600.6px;width:2533px;height:46.7px;background:#4b4b4b'></div>
<svg class='a' style='left:767px;top:609.1px' width='24' height='22' viewBox='0 0 25 23'><path d='M12.5 7 V11 M5 15 V11.5 H19.5 V15' fill='none' stroke='#8a8a8a' stroke-width='1.3'/><rect x='7.5' y='0.5' width='10' height='7.5' rx='1.5' fill='#ffb515'/><rect x='0.5' y='14' width='10' height='7.5' rx='1.5' fill='#ffb515'/><rect x='14.5' y='14' width='10' height='7.5' rx='1.5' fill='#ffb515'/></svg>
<svg class='a' style='left:1022px;top:609.1px' width='24' height='22' viewBox='0 0 25 23'><path d='M12.5 7 V11 M5 15 V11.5 H19.5 V15' fill='none' stroke='#8a8a8a' stroke-width='1.3'/><rect x='7.5' y='0.5' width='10' height='7.5' rx='1.5' fill='#ffb515'/><rect x='0.5' y='14' width='10' height='7.5' rx='1.5' fill='#ffb515'/><rect x='14.5' y='14' width='10' height='7.5' rx='1.5' fill='#ffb515'/></svg>
<svg class='a' style='left:1279px;top:608.1px' width='21' height='25' viewBox='0 0 21 25'><circle cx='15.5' cy='4.7' r='4.6' fill='#f0b000'/><circle cx='15.5' cy='4.7' r='2.3' fill='#d89800'/><rect x='10.5' y='9.5' width='10' height='2.5' fill='#c89010'/><rect x='10.5' y='12.0' width='10' height='2.5' fill='#ffc820'/><rect x='10.5' y='14.5' width='10' height='2.5' fill='#c89010'/><rect x='10.5' y='17.0' width='10' height='2.5' fill='#ffc820'/><rect x='10.5' y='19.5' width='10' height='2.5' fill='#c89010'/><rect x='10.5' y='22.0' width='10' height='2.5' fill='#ffc820'/><rect x='0.5' y='14.5' width='9.5' height='2.5' fill='#c89010'/><rect x='0.5' y='17.0' width='9.5' height='2.5' fill='#ffc820'/><rect x='0.5' y='19.5' width='9.5' height='2.5' fill='#c89010'/><rect x='0.5' y='22.0' width='9.5' height='2.5' fill='#ffc820'/></svg>
<div class='a' style='left:5px;top:0;width:1px;height:608px;background:#2b2b2b'></div>
<div class='a' style='left:230px;top:0;width:1px;height:608px;background:#2b2b2b'></div>
<div class='a' style='left:380px;top:0;width:1px;height:608px;background:#2b2b2b'></div>
<div class='a' style='left:605px;top:0;width:1px;height:608px;background:#2b2b2b'></div>
<div class='a' style='left:755px;top:0;width:1px;height:608px;background:#2b2b2b'></div>
<div class='a' style='left:800px;top:0;width:1px;height:608px;background:#2b2b2b'></div>
<div class='a' style='left:1010px;top:0;width:1px;height:608px;background:#2b2b2b'></div>
<div class='a' style='left:1055px;top:0;width:1px;height:608px;background:#2b2b2b'></div>
<div class='a' style='left:1265px;top:0;width:1px;height:608px;background:#2b2b2b'></div>
<div class='a' style='left:1310px;top:0;width:1px;height:608px;background:#2b2b2b'></div>
<div class='a' style='left:1430px;top:0;width:1px;height:608px;background:#2b2b2b'></div>
<div class='a' style='left:1565px;top:0;width:1px;height:608px;background:#2b2b2b'></div>
<div class='a' style='left:1700px;top:0;width:1px;height:608px;background:#2b2b2b'></div>
<div class='a' style='left:1839px;top:0;width:1px;height:608px;background:#2b2b2b'></div>
<div class='a' style='left:1974px;top:0;width:1px;height:608px;background:#2b2b2b'></div>
<div class='a' style='left:2109px;top:0;width:1px;height:608px;background:#2b2b2b'></div>
<div class='a' style='left:2244px;top:0;width:1px;height:608px;background:#2b2b2b'></div>
<div class='a' style='left:2469px;top:0;width:1px;height:608px;background:#2b2b2b'></div>
</div>
<div class='a' style='left:2px;top:379px;width:2533px;height:53px;background:linear-gradient(#1874d4,#0066cc)'></div>
<div class='a' style='left:7px;top:379px;width:1px;height:53px;background:#2b2b2b'></div>
<div class='a' style='left:232px;top:379px;width:1px;height:53px;background:#2b2b2b'></div>
<div class='a' style='left:382px;top:379px;width:1px;height:53px;background:#2b2b2b'></div>
<div class='a' style='left:607px;top:379px;width:1px;height:53px;background:#2b2b2b'></div>
<div class='a' style='left:757px;top:379px;width:1px;height:53px;background:#2b2b2b'></div>
<div class='a' style='left:802px;top:379px;width:1px;height:53px;background:#2b2b2b'></div>
<div class='a' style='left:1012px;top:379px;width:1px;height:53px;background:#2b2b2b'></div>
<div class='a' style='left:1057px;top:379px;width:1px;height:53px;background:#2b2b2b'></div>
<div class='a' style='left:1267px;top:379px;width:1px;height:53px;background:#2b2b2b'></div>
<div class='a' style='left:1312px;top:379px;width:1px;height:53px;background:#2b2b2b'></div>
<div class='a' style='left:1432px;top:379px;width:1px;height:53px;background:#2b2b2b'></div>
<div class='a' style='left:1567px;top:379px;width:1px;height:53px;background:#2b2b2b'></div>
<div class='a' style='left:1702px;top:379px;width:1px;height:53px;background:#2b2b2b'></div>
<div class='a' style='left:1841px;top:379px;width:1px;height:53px;background:#2b2b2b'></div>
<div class='a' style='left:1976px;top:379px;width:1px;height:53px;background:#2b2b2b'></div>
<div class='a' style='left:2111px;top:379px;width:1px;height:53px;background:#2b2b2b'></div>
<div class='a' style='left:2246px;top:379px;width:1px;height:53px;background:#2b2b2b'></div>
<div class='a' style='left:2471px;top:379px;width:1px;height:53px;background:#2b2b2b'></div>
<div class='a' style='left:19px;top:385px;width:203px;height:40px;border-radius:7px;background:#222'></div>
<div class='a' style='left:20px;top:386px;width:163px;height:38px;background:#fff;border-radius:6px 0 0 6px'></div>
<div class='a' style='left:183px;top:386px;width:38px;height:38px;border-radius:0 6px 6px 0;background:linear-gradient(to bottom, #424242 0px, #424242 0.0px, #454545 19.0px, #333333 19.0px, #2a2a2a 38.0px, #2a2a2a 38px)'></div>
<div class='tri' style='left:195.5px;top:402.5px'></div>
<div class='t' style='left:36px;top:393px;color:#262626;width:147px;overflow:hidden'>Voice Over - GL...</div>
<div class='a' style='left:244px;top:385px;width:128px;height:40px;border-radius:7px;background:#222'></div>
<div class='a' style='left:245px;top:386px;width:88px;height:38px;background:#fff;border-radius:6px 0 0 6px'></div>
<div class='a' style='left:333px;top:386px;width:38px;height:38px;border-radius:0 6px 6px 0;background:linear-gradient(to bottom, #424242 0px, #424242 0.0px, #454545 19.0px, #333333 19.0px, #2a2a2a 38.0px, #2a2a2a 38px)'></div>
<div class='tri' style='left:345.5px;top:402.5px'></div>
<div class='t' style='left:256px;top:393px;color:#262626;width:77px;overflow:hidden'>Localiza...</div>
<div class='a' style='left:394px;top:385px;width:203px;height:40px;border-radius:7px;background:#222'></div>
<div class='a' style='left:395px;top:386px;width:163px;height:38px;background:#fff;border-radius:6px 0 0 6px'></div>
<div class='a' style='left:558px;top:386px;width:38px;height:38px;border-radius:0 6px 6px 0;background:linear-gradient(to bottom, #424242 0px, #424242 0.0px, #454545 19.0px, #333333 19.0px, #2a2a2a 38.0px, #2a2a2a 38px)'></div>
<div class='tri' style='left:570.5px;top:402.5px'></div>
<div class='t' style='left:410px;top:393px;color:#262626;width:148px;overflow:hidden'>Euro</div>
<div class='a' style='left:619px;top:385px;width:127px;height:40px;border-radius:7px;background:#222'></div>
<div class='a' style='left:620px;top:386px;width:88px;height:38px;background:#fff;border-radius:6px 0 0 6px'></div>
<div class='a' style='left:708px;top:386px;width:37px;height:38px;border-radius:0 6px 6px 0;background:linear-gradient(to bottom, #424242 0px, #424242 0.0px, #454545 19.0px, #333333 19.0px, #2a2a2a 38.0px, #2a2a2a 38px)'></div>
<div class='tri' style='left:720.0px;top:402.5px'></div>
<div class='t' style='left:636px;top:393px;color:#262626;width:72px;overflow:hidden'>Min</div>
<div class='a' style='left:814px;top:385px;width:188px;height:40px;border-radius:7px;background:#222'></div>
<div class='a' style='left:815px;top:386px;width:148px;height:38px;background:#fff;border-radius:6px 0 0 6px'></div>
<div class='a' style='left:963px;top:386px;width:38px;height:38px;border-radius:0 6px 6px 0;background:linear-gradient(to bottom, #424242 0px, #424242 0.0px, #454545 19.0px, #333333 19.0px, #2a2a2a 38.0px, #2a2a2a 38px)'></div>
<div class='tri' style='left:975.5px;top:402.5px'></div>
<div class='a' style='left:1069px;top:385px;width:188px;height:40px;border-radius:7px;background:#222'></div>
<div class='a' style='left:1070px;top:386px;width:148px;height:38px;background:#fff;border-radius:6px 0 0 6px'></div>
<div class='a' style='left:1218px;top:386px;width:38px;height:38px;border-radius:0 6px 6px 0;background:linear-gradient(to bottom, #424242 0px, #424242 0.0px, #454545 19.0px, #333333 19.0px, #2a2a2a 38.0px, #2a2a2a 38px)'></div>
<div class='tri' style='left:1230.5px;top:402.5px'></div>
<svg class='a' style='left:769px;top:389px' width='24' height='22' viewBox='0 0 25 23'><path d='M12.5 7 V11 M5 15 V11.5 H19.5 V15' fill='none' stroke='#8a8a8a' stroke-width='1.3'/><rect x='7.5' y='0.5' width='10' height='7.5' rx='1.5' fill='#ffb515'/><rect x='0.5' y='14' width='10' height='7.5' rx='1.5' fill='#ffb515'/><rect x='14.5' y='14' width='10' height='7.5' rx='1.5' fill='#ffb515'/></svg>
<svg class='a' style='left:1024px;top:389px' width='24' height='22' viewBox='0 0 25 23'><path d='M12.5 7 V11 M5 15 V11.5 H19.5 V15' fill='none' stroke='#8a8a8a' stroke-width='1.3'/><rect x='7.5' y='0.5' width='10' height='7.5' rx='1.5' fill='#ffb515'/><rect x='0.5' y='14' width='10' height='7.5' rx='1.5' fill='#ffb515'/><rect x='14.5' y='14' width='10' height='7.5' rx='1.5' fill='#ffb515'/></svg>
<svg class='a' style='left:1281px;top:389px' width='21' height='25' viewBox='0 0 21 25'><circle cx='15.5' cy='4.7' r='4.6' fill='#f0b000'/><circle cx='15.5' cy='4.7' r='2.3' fill='#d89800'/><rect x='10.5' y='9.5' width='10' height='2.5' fill='#c89010'/><rect x='10.5' y='12.0' width='10' height='2.5' fill='#ffc820'/><rect x='10.5' y='14.5' width='10' height='2.5' fill='#c89010'/><rect x='10.5' y='17.0' width='10' height='2.5' fill='#ffc820'/><rect x='10.5' y='19.5' width='10' height='2.5' fill='#c89010'/><rect x='10.5' y='22.0' width='10' height='2.5' fill='#ffc820'/><rect x='0.5' y='14.5' width='9.5' height='2.5' fill='#c89010'/><rect x='0.5' y='17.0' width='9.5' height='2.5' fill='#ffc820'/><rect x='0.5' y='19.5' width='9.5' height='2.5' fill='#c89010'/><rect x='0.5' y='22.0' width='9.5' height='2.5' fill='#ffc820'/></svg>
<div class='t' style='left:1325px;top:393px'>1</div>
<div class='a' style='left:1444px;top:386px;width:107px;height:39px;border-radius:7px;background:#222'></div>
<div class='a' style='left:1445px;top:387px;width:72px;height:37px;background:#fff;border-radius:6px 0 0 6px'></div>
<div class='a' style='left:1517px;top:387px;width:33px;height:37px;border-radius:0 6px 6px 0;background:linear-gradient(to bottom, #424242 0px, #424242 0.0px, #454545 18.5px, #333333 18.5px, #2a2a2a 37.0px, #2a2a2a 37px)'></div>
<div class='a' style='left:1527.0px;top:391.5px;width:0;height:0;border-left:6.5px solid transparent;border-right:6.5px solid transparent;border-bottom:10px solid #fff'></div>
<div class='a' style='left:1527.0px;top:409.5px;width:0;height:0;border-left:6.5px solid transparent;border-right:6.5px solid transparent;border-top:10px solid #fff'></div>
<div class='t' style='left:1457px;top:393px;color:#262626'>1.00</div>
<div class='a' style='left:1579px;top:386px;width:106px;height:39px;border-radius:7px;background:#222'></div>
<div class='a' style='left:1580px;top:387px;width:72px;height:37px;background:#fff;border-radius:6px 0 0 6px'></div>
<div class='a' style='left:1652px;top:387px;width:32px;height:37px;border-radius:0 6px 6px 0;background:linear-gradient(to bottom, #424242 0px, #424242 0.0px, #454545 18.5px, #333333 18.5px, #2a2a2a 37.0px, #2a2a2a 37px)'></div>
<div class='a' style='left:1661.5px;top:391.5px;width:0;height:0;border-left:6.5px solid transparent;border-right:6.5px solid transparent;border-bottom:10px solid #fff'></div>
<div class='a' style='left:1661.5px;top:409.5px;width:0;height:0;border-left:6.5px solid transparent;border-right:6.5px solid transparent;border-top:10px solid #fff'></div>
<div class='t' style='left:1592px;top:393px;color:#262626'>1.00</div>
<div class='a' style='left:1714px;top:386px;width:116px;height:39px;border-radius:7px;background:#222'></div>
<div class='a' style='left:1715px;top:387px;width:77px;height:37px;background:#fff;border-radius:6px 0 0 6px'></div>
<div class='a' style='left:1792px;top:387px;width:37px;height:37px;border-radius:0 6px 6px 0;background:linear-gradient(to bottom, #424242 0px, #424242 0.0px, #454545 18.5px, #333333 18.5px, #2a2a2a 37.0px, #2a2a2a 37px)'></div>
<div class='a' style='left:1804.0px;top:391.5px;width:0;height:0;border-left:6.5px solid transparent;border-right:6.5px solid transparent;border-bottom:10px solid #fff'></div>
<div class='a' style='left:1804.0px;top:409.5px;width:0;height:0;border-left:6.5px solid transparent;border-right:6.5px solid transparent;border-top:10px solid #fff'></div>
<div class='t' style='left:1727px;top:393px;color:#262626'>1.00</div>
<div class='a' style='left:1853px;top:386px;width:112px;height:39px;border-radius:7px;background:#222'></div>
<div class='a' style='left:1854px;top:387px;width:73px;height:37px;background:#fff;border-radius:6px 0 0 6px'></div>
<div class='a' style='left:1927px;top:387px;width:37px;height:37px;border-radius:0 6px 6px 0;background:linear-gradient(to bottom, #424242 0px, #424242 0.0px, #454545 18.5px, #333333 18.5px, #2a2a2a 37.0px, #2a2a2a 37px)'></div>
<div class='a' style='left:1939.0px;top:391.5px;width:0;height:0;border-left:6.5px solid transparent;border-right:6.5px solid transparent;border-bottom:10px solid #fff'></div>
<div class='a' style='left:1939.0px;top:409.5px;width:0;height:0;border-left:6.5px solid transparent;border-right:6.5px solid transparent;border-top:10px solid #fff'></div>
<div class='t' style='left:1866px;top:393px;color:#262626'>0.00</div>
<div class='a' style='left:1988px;top:386px;width:112px;height:39px;border-radius:7px;background:#222'></div>
<div class='a' style='left:1989px;top:387px;width:73px;height:37px;background:#fff;border-radius:6px 0 0 6px'></div>
<div class='a' style='left:2062px;top:387px;width:37px;height:37px;border-radius:0 6px 6px 0;background:linear-gradient(to bottom, #424242 0px, #424242 0.0px, #454545 18.5px, #333333 18.5px, #2a2a2a 37.0px, #2a2a2a 37px)'></div>
<div class='a' style='left:2074.0px;top:391.5px;width:0;height:0;border-left:6.5px solid transparent;border-right:6.5px solid transparent;border-bottom:10px solid #fff'></div>
<div class='a' style='left:2074.0px;top:409.5px;width:0;height:0;border-left:6.5px solid transparent;border-right:6.5px solid transparent;border-top:10px solid #fff'></div>
<div class='t' style='left:2001px;top:393px;color:#262626'>0.00</div>
<div class='a' style='left:2123px;top:386px;width:112px;height:39px;border-radius:7px;background:#222'></div>
<div class='a' style='left:2124px;top:387px;width:73px;height:37px;background:#fff;border-radius:6px 0 0 6px'></div>
<div class='a' style='left:2197px;top:387px;width:37px;height:37px;border-radius:0 6px 6px 0;background:linear-gradient(to bottom, #424242 0px, #424242 0.0px, #454545 18.5px, #333333 18.5px, #2a2a2a 37.0px, #2a2a2a 37px)'></div>
<div class='a' style='left:2209.0px;top:391.5px;width:0;height:0;border-left:6.5px solid transparent;border-right:6.5px solid transparent;border-bottom:10px solid #fff'></div>
<div class='a' style='left:2209.0px;top:409.5px;width:0;height:0;border-left:6.5px solid transparent;border-right:6.5px solid transparent;border-top:10px solid #fff'></div>
<div class='t' style='left:2136px;top:393px;color:#262626'>0.00</div>
<div class='t' style='left:2258px;top:393px;width:213px;overflow:hidden'>Maya's consolidated account</div>
<div class='t' style='left:2483px;top:393px;width:52px;overflow:hidden'>Maya Mayer</div>
<div class='a' style='left:1425px;top:250px;width:130px;height:186px;border:5px solid #00f77a;border-radius:16px'></div>
<div class='a' style='left:1560px;top:250px;width:130px;height:186px;border:5px solid #00f77a;border-radius:16px'></div>
<div class='a' style='left:1695px;top:250px;width:141px;height:186px;border:5px solid #00f77a;border-radius:16px'></div>
<div class='a' style='left:1470px;top:450px;width:40px;height:40px;border-radius:50%;background:#00f77a;box-shadow:2px 3px 4px rgba(0,0,0,.45);color:#000;font-size:30px;line-height:40px;text-align:center'></div>
<div class='a' style='left:1605px;top:451px;width:40px;height:40px;border-radius:50%;background:#00f77a;box-shadow:2px 3px 4px rgba(0,0,0,.45);color:#000;font-size:30px;line-height:40px;text-align:center'>2</div>
<div class='a' style='left:1738px;top:451px;width:40px;height:40px;border-radius:50%;background:#00f77a;box-shadow:2px 3px 4px rgba(0,0,0,.45);color:#000;font-size:30px;line-height:40px;text-align:center'>3</div>
<svg class='a' style='left:1480px;top:455px' width='20' height='30' viewBox='1480 455 20 30'><path d='M1490 460 H1493 V481 H1490 V465.3 Q1488 467.5 1485 468.6 V465.6 Q1488.5 464 1490 460 Z' fill='#000'/></svg>
<div class='a' style='left:2535px;top:379px;width:25px;height:661px;background:#f0f0f0'></div>
<div class='a' style='left:2537px;top:404px;width:21px;height:434px;background:#c1c1c1'></div>
<div class='a' style='left:2541px;top:388px;width:0;height:0;border-left:7px solid transparent;border-right:7px solid transparent;border-bottom:7px solid #a3a3a3'></div>
<div class='a' style='left:2541px;top:1023px;width:0;height:0;border-left:7px solid transparent;border-right:7px solid transparent;border-top:7px solid #505050'></div>
<div class='a' style='left:2px;top:1040px;width:2533px;height:25px;background:#f0f0f0'></div>
<div class='a' style='left:572px;top:1042px;width:1383px;height:21px;background:#c1c1c1'></div>
<div class='a' style='left:11px;top:1047px;width:0;height:0;border-top:6px solid transparent;border-bottom:6px solid transparent;border-right:7px solid #505050'></div>
<div class='a' style='left:2519px;top:1047px;width:0;height:0;border-top:6px solid transparent;border-bottom:6px solid transparent;border-left:7px solid #505050'></div>
<div class='a' style='left:2535px;top:1040px;width:25px;height:25px;background:#dcdcdc'></div>
<div class='a' style='left:2px;top:1065px;width:2558px;height:49px;background:linear-gradient(to bottom, #2a2626 0px, #2a2626 -11.0px, #383534 0.0px, #403d3c 23.0px, #363232 23.0px, #2a2626 42.0px, #2a2626 49px)'></div>
<svg class='a' style='left:11px;top:1071px' width='25' height='25' viewBox='0 0 25 25'><circle cx='12.2' cy='12.2' r='12' fill='#7dc21e'/><path d='M12.2 5.5 V19 M5.5 12.2 H19' stroke='#fff' stroke-width='3.5'/></svg>
<div class='t' style='left:35px;top:1077px;transform:scaleX(1.0126);transform-origin:0 0;'>Add price</div>
<svg class='a' style='left:121px;top:1071px' width='25' height='25' viewBox='0 0 25 25'><circle cx='12.2' cy='12.2' r='12' fill='#8ab04a'/><path d='M8.5 6 L18.5 12 L8.5 18 Z' fill='#fff'/></svg>
<div class='t' style='left:145px;top:1077px;transform:scaleX(0.9878);transform-origin:0 0;'>Generate export</div>
<div class='t' style='left:294px;top:1077px'>|</div>
<svg class='a' style='left:322px;top:1071px' width='25' height='25' viewBox='0 0 25 25'><circle cx='12.2' cy='12.2' r='12' fill='#e0521a'/><rect x='5.5' y='10' width='13.5' height='4.5' fill='#fff'/></svg>
<div class='t' style='left:347px;top:1077px;transform:scaleX(0.9691);transform-origin:0 0;'>Show inactive prices</div>
<svg class='a' style='left:519px;top:1071px' width='20' height='24' viewBox='0 0 20 24'><path d='M5 1 H13 L17 5 V18 H5 Z' fill='#fff' stroke='#444' stroke-width='1'/><path d='M1 5 H9 L13 9 V23 H1 Z' fill='#fff' stroke='#444' stroke-width='1'/><path d='M3 12 H11 M3 15 H11 M3 18 H11 M3 21 H11' stroke='#777' stroke-width='1'/></svg>
<div class='t' style='left:541px;top:1077px;transform:scaleX(0.9706);transform-origin:0 0;'>Copy files to Storage Server</div>
<div class='a' style='left:2px;top:1114px;width:2558px;height:51px;background:linear-gradient(to bottom, #2a2626 0px, #2a2626 -9.5px, #383534 1.5px, #403d3c 24.5px, #363232 24.5px, #2a2626 43.5px, #2a2626 51px)'></div>
<div class='a' style='left:8px;top:1121px;width:38px;height:38px;border-radius:50%;background:#2a2626'></div>
<div class='a' style='left:50px;top:1121px;width:38px;height:38px;border-radius:50%;background:#2a2626'></div>
<div class='a' style='left:20px;top:1133px;width:3px;height:14px;background:#aaa'></div>
<div class='a' style='left:23px;top:1133px;width:0;height:0;border-top:7px solid transparent;border-bottom:7px solid transparent;border-right:9px solid #aaa'></div>
<div class='a' style='left:64px;top:1133px;width:0;height:0;border-top:7px solid transparent;border-bottom:7px solid transparent;border-right:10px solid #aaa'></div>
<div class='a' style='left:92px;top:1121px;width:38px;height:38px;border-radius:50%;background:linear-gradient(#1874d4,#0066cc)'></div>
<div class='t' style='left:105px;top:1128px'>1</div>
<div class='t' style='left:147px;top:1128px'>2</div>
<div class='t' style='left:190px;top:1129px'>Page</div>
<div class='a' style='left:238px;top:1121px;width:52px;height:37px;background:#fff;border-radius:6px'></div>
<div class='t' style='left:250px;top:1128px;color:#000'>1</div>
<div class='t' style='left:301px;top:1129px'>of 2</div>
<div class='a' style='left:349px;top:1121px;width:38px;height:38px;border-radius:50%;background:#2a2626'></div>
<div class='a' style='left:391px;top:1121px;width:38px;height:38px;border-radius:50%;background:#2a2626'></div>
<div class='a' style='left:364px;top:1133px;width:0;height:0;border-top:7px solid transparent;border-bottom:7px solid transparent;border-left:10px solid #fff'></div>
<div class='a' style='left:404px;top:1133px;width:0;height:0;border-top:7px solid transparent;border-bottom:7px solid transparent;border-left:9px solid #fff'></div>
<div class='a' style='left:413px;top:1133px;width:3px;height:14px;background:#fff'></div>
<div class='a' style='left:450px;top:1121px;width:51px;height:37px;background:#fff;border-radius:6px 0 0 6px'></div>
<div class='a' style='left:501px;top:1121px;width:36px;height:37px;border-radius:0 6px 6px 0;background:linear-gradient(to bottom, #424242 0px, #424242 0.0px, #454545 18.5px, #333333 18.5px, #2a2a2a 37.0px, #2a2a2a 37px)'></div>
<div class='tri' style='left:512px;top:1135px'></div>
<div class='t' style='left:460px;top:1128px;color:#000'>20</div>
<div class='t' style='left:547px;top:1129px'>items per page</div>
<div class='t' style='left:2280px;top:1129px'>1 - 20 of 40 items</div>
<div class='a' style='left:2437px;top:1121px;width:38px;height:38px;border-radius:50%;background:#2a2626'></div>
<div class='a' style='left:2476.5px;top:1121px;width:38px;height:38px;border-radius:50%;background:#2a2626'></div>
<div class='a' style='left:2515.6px;top:1121px;width:38px;height:38px;border-radius:50%;background:#2a2626'></div>
<svg class='a' style='left:2430px;top:1115px' width='130' height='50' viewBox='0 0 130 50'>
<rect x='23.9' y='14' width='4' height='21' fill='#fff'/>
<path d='M13.7 25 L20.8 20.8 V29.2 Z M38 25 L31 20.8 V29.2 Z' fill='#fff'/><rect x='20' y='24' width='3' height='2' fill='#fff'/><rect x='28.5' y='24' width='3' height='2' fill='#fff'/>
<path d='M55.4 15.5 H74.7 L66.5 24 V32.5 L63 35 V24 Z' fill='#fff'/>
<path d='M58.6 12.3 L76.5 30.2' stroke='#2a2626' stroke-width='2.4'/>
<path d='M61.7 13.5 L76.7 28.3' stroke='#fff' stroke-width='2.4' stroke-linecap='round'/>
<path d='M104.1 18.7 A9 9 0 1 0 112.4 24.2' fill='none' stroke='#fff' stroke-width='4'/>
<path d='M103.2 12.6 L111.8 17 L103.2 22 Z' fill='#fff'/>
</svg>
<div class='a' style='left:1px;top:1165px;width:1px;height:28px;background:#4c4c4c'></div>
<div class='a' style='left:2px;top:1165px;width:2558px;height:28px;background:#4c4c4c'></div>
<div class='a' style='left:1px;top:206px;width:1px;height:987px;background:#464646'></div>
<div class='a' style='left:0;top:1193px;width:2560px;height:181px;background:#292929'></div>
<div class='a' style='left:1096px;top:1355.5px;white-space:nowrap;font-size:15px;line-height:18px;color:#fff;transform:scaleX(0.982);transform-origin:0 0'>Copyright &copy; 2012 <span style='color:#888'><span style='font-style:italic;color:#888'>O</span><span style='color:#fbb914'>O</span><span style='color:#2cc0e8'>O</span>NA.NET</span> ltd. All rights reserved.</div>
<div class='a' style='left:2480px;top:1350px;width:78px;height:22px;border-radius:8px;background:#8b0000;color:#fff;font-size:14px;line-height:22px;text-align:center;white-space:nowrap'>Zoom 150%</div>
</body></html>
